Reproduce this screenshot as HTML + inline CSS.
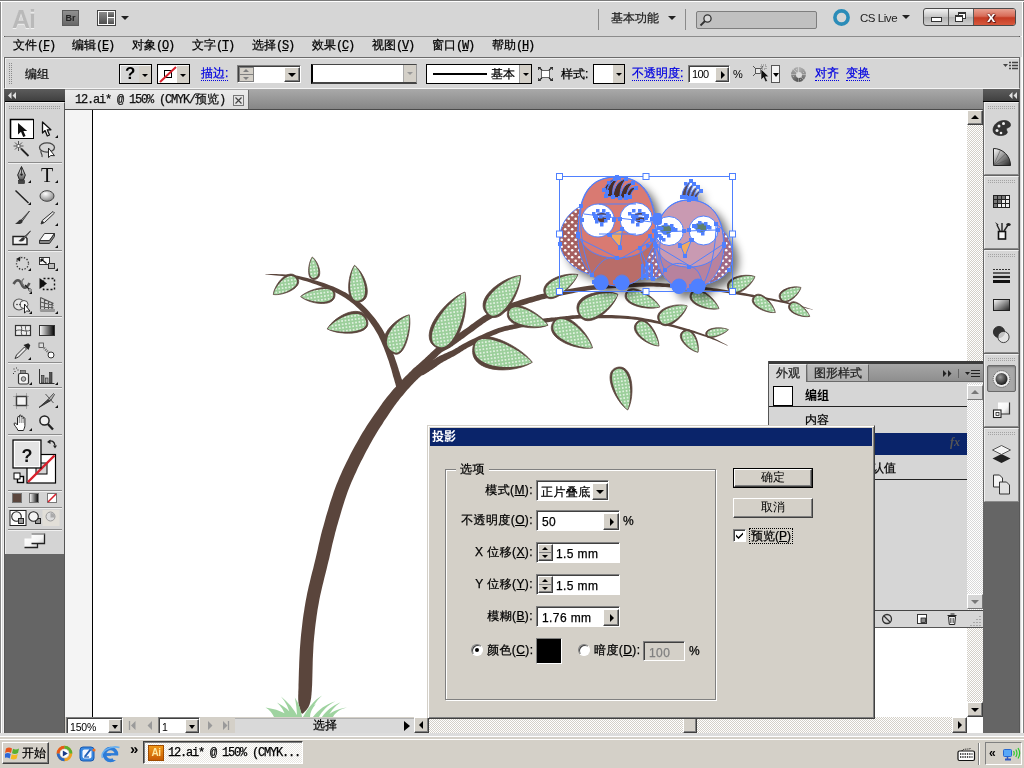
<!DOCTYPE html>
<html lang="zh-CN">
<head>
<meta charset="utf-8">
<title>12.ai* @ 150% (CMYK/预览)</title>
<style>
*{box-sizing:border-box;margin:0;padding:0}
html,body{width:1024px;height:768px;overflow:hidden;background:#d6d6d6}
body{position:relative;font-family:"Liberation Sans","Noto Sans CJK SC",sans-serif;font-size:12px;color:#000;line-height:1}
.a{position:absolute}
.zh,.tx,.dl{-webkit-text-stroke:.25px currentColor}
.zh{font-family:"Liberation Mono","WenQuanYi Zen Hei","Noto Sans CJK SC",monospace;font-size:12px;white-space:nowrap;line-height:14px}
.zh i{font-style:normal;letter-spacing:-1.2px}
.tx{font-family:"Liberation Sans","WenQuanYi Zen Hei","Noto Sans CJK SC",sans-serif;font-size:12px;white-space:nowrap;line-height:14px}
.lnk{color:#0000e0;border-bottom:1px dotted #0000e0;line-height:13px}
/* classic win controls */
.btn{background:#d4d0c8;border:1px solid;border-color:#fff #404040 #404040 #fff;box-shadow:inset -1px -1px 0 #808080}
.sunk{background:#fff;border:1px solid;border-color:#808080 #fff #fff #808080;box-shadow:inset 1px 1px 0 #404040}
.chk{background-image:linear-gradient(45deg,#fff 25%,transparent 25%,transparent 75%,#fff 75%),linear-gradient(45deg,#fff 25%,transparent 25%,transparent 75%,#fff 75%);background-size:2px 2px;background-position:0 0,1px 1px;background-color:#d4d0c8}
.dg{left:984px;width:35px;background:#d6d6d6;border:1px solid;border-color:#f0f0f0 #8a8a8a #8a8a8a #f0f0f0}
.dl{font:12px/14px "Liberation Sans","WenQuanYi Zen Hei","Noto Sans CJK SC",sans-serif;white-space:nowrap;letter-spacing:.4px}
.dr{right:342px;text-align:right}
.spin{width:15px;height:17px;background:#d4d0c8;border:1px solid;border-color:#fff #404040 #404040 #fff;box-shadow:inset -1px -1px 0 #808080}
.spin b{position:absolute;left:3px;border-width:3px!important}
.spin b.tri-u{top:2px;border-top:0!important}
.spin b.tri-d{top:10px;border-bottom:0!important}
.spin:after{content:"";position:absolute;left:0;top:7px;width:13px;height:1px;background:#808080}
.radio{width:12px;height:12px;border-radius:50%;background:#fff;border:1px solid;border-color:#808080 #fff #fff #808080;box-shadow:inset 1px 1px 0 #404040}
.radio b{position:absolute;left:3px;top:3px;width:4px;height:4px;border-radius:50%;background:#000}
.tri-d{width:0;height:0;border-left:4px solid transparent;border-right:4px solid transparent;border-top:4px solid #000}
.tri-u{width:0;height:0;border-left:4px solid transparent;border-right:4px solid transparent;border-bottom:4px solid #000}
.tri-r{width:0;height:0;border-top:4px solid transparent;border-bottom:4px solid transparent;border-left:4px solid #000}
.tri-l{width:0;height:0;border-top:4px solid transparent;border-bottom:4px solid transparent;border-right:4px solid #000}
</style>
</head>
<body>
<div id="root" style="position:absolute;left:0;top:0;width:1024px;height:768px;will-change:transform">

<!-- ===== window frame ===== -->
<div class="a" id="frameL" style="left:0;top:0;width:5px;height:737px;background:linear-gradient(to right,#888 0 1px,#fff 1px 2px,#d8d8d8 2px 3px,#f0f0f0 3px 4px,#585858 4px 5px)"></div>
<div class="a" id="frameR" style="left:1019px;top:0;width:5px;height:737px;background:linear-gradient(to right,#585858 0 1px,#d8d8d8 1px 2px,#f4f4f4 2px 3px,#fff 3px 4px,#808080 4px 5px)"></div>
<div class="a" id="frameT" style="left:0;top:0;width:1024px;height:2px;background:linear-gradient(#7b7b7b 0 1px,#fff 1px 2px)"></div>

<!-- ===== application bar ===== -->
<div class="a" id="appbar" style="left:2px;top:2px;width:1020px;height:34px;background:#d6d6d6"></div>
<div class="a" style="left:5px;top:36px;width:1014px;height:1px;background:#8c8c8c"></div>

<!-- ===== menu bar ===== -->
<div class="a" id="menubar" style="left:2px;top:37px;width:1020px;height:20px;background:#d6d6d6"></div>


<!-- ===== app bar content ===== -->
<div class="a" style="left:12px;top:5px;font:bold 25px/28px 'Liberation Sans',sans-serif;color:#b9b9b9;letter-spacing:-1px;text-shadow:0 1px 0 #f0f0f0">Ai</div>
<div class="a" style="left:62px;top:10px;width:17px;height:16px;background:linear-gradient(#909090,#686868);border:1px solid #5c5c5c;font:bold 9px/14px 'Liberation Sans',sans-serif;color:#222;text-align:center">Br</div>
<svg class="a" style="left:97px;top:10px" width="19" height="16" viewBox="0 0 19 16"><defs><linearGradient id="gl" x1="0" y1="0" x2="0" y2="1"><stop offset="0" stop-color="#8a8a8a"/><stop offset="1" stop-color="#4e4e4e"/></linearGradient></defs><rect x=".5" y=".5" width="18" height="15" fill="#fff" stroke="#444"/><rect x="2" y="2" width="8" height="12" fill="url(#gl)"/><rect x="11" y="2" width="6" height="5" fill="url(#gl)"/><rect x="11" y="8" width="6" height="6" fill="url(#gl)"/></svg>
<div class="a tri-d" style="left:121px;top:16px;border-top-color:#222"></div>
<div class="a" style="left:598px;top:9px;width:1px;height:21px;background:#8a8a8a"></div>
<div class="a tx" style="left:611px;top:11px;color:#222">基本功能</div>
<div class="a tri-d" style="left:668px;top:16px;border-top-color:#222"></div>
<div class="a" style="left:685px;top:9px;width:1px;height:21px;background:#8a8a8a"></div>
<div class="a" style="left:696px;top:11px;width:121px;height:18px;background:#c0c0c0;border:1px solid #7e7e7e;border-radius:2px"></div>
<svg class="a" style="left:699px;top:13px" width="14" height="14" viewBox="0 0 14 14"><circle cx="8.5" cy="5.5" r="3.6" fill="#d8d8d8" stroke="#333" stroke-width="1.3"/><path d="M6 8 L1.5 12.5" stroke="#333" stroke-width="1.8"/></svg>
<svg class="a" style="left:832px;top:8px" width="20" height="20" viewBox="0 0 20 20"><circle cx="9.5" cy="9.5" r="6.6" fill="none" stroke="#2b8cb8" stroke-width="3.6"/></svg>
<div class="a" style="left:860px;top:11px;font:11.5px/15px 'Liberation Sans',sans-serif;color:#222;letter-spacing:-.45px">CS Live</div>
<div class="a tri-d" style="left:902px;top:15px;border-top-color:#222"></div>
<!-- window buttons -->
<div class="a" style="left:923px;top:8px;width:93px;height:18px;border:1px solid #4a4a4a;border-radius:3px;background:linear-gradient(#f4f4f4,#c4c4c4 50%,#b0b0b0 51%,#d0d0d0);overflow:hidden">
  <div class="a" style="left:24px;top:0;width:1px;height:16px;background:#5a5a5a"></div>
  <div class="a" style="left:49px;top:0;width:1px;height:16px;background:#5a5a5a"></div>
  <div class="a" style="left:50px;top:0;width:42px;height:16px;background:linear-gradient(#e8a090,#d86c58 45%,#c43c24 55%,#d8583c)"></div>
  <div class="a" style="left:7px;top:8px;width:11px;height:5px;background:#fff;border:1px solid #333"></div>
  <div class="a" style="left:34px;top:3px;width:8px;height:7px;border:1px solid #333;border-top-width:2px;background:#fff"></div>
  <div class="a" style="left:31px;top:6px;width:8px;height:7px;border:1px solid #333;border-top-width:2px;background:#fff"></div>
  <div class="a" style="left:63px;top:-1px;font:bold 15px/17px 'Liberation Sans',sans-serif;color:#fff;text-shadow:0 0 2px #400,0 0 1px #400,1px 1px 0 #622">x</div>
</div>

<!-- ===== menu bar content ===== -->
<div class="a zh" style="left:13px;top:39px">文件<i>(<u>F</u>)</i></div>
<div class="a zh" style="left:72px;top:39px">编辑<i>(<u>E</u>)</i></div>
<div class="a zh" style="left:132px;top:39px">对象<i>(<u>O</u>)</i></div>
<div class="a zh" style="left:192px;top:39px">文字<i>(<u>T</u>)</i></div>
<div class="a zh" style="left:252px;top:39px">选择<i>(<u>S</u>)</i></div>
<div class="a zh" style="left:312px;top:39px">效果<i>(<u>C</u>)</i></div>
<div class="a zh" style="left:372px;top:39px">视图<i>(<u>V</u>)</i></div>
<div class="a zh" style="left:432px;top:39px">窗口<i>(<u>W</u>)</i></div>
<div class="a zh" style="left:492px;top:39px">帮助<i>(<u>H</u>)</i></div>

<!-- ===== control bar ===== -->
<div class="a" id="ctrlbar" style="left:4px;top:57px;width:1016px;height:32px;background:#d6d6d6;border:1px solid #6b6b6b;border-bottom-color:#f4f4f4;box-shadow:inset 1px 1px 0 #f0f0f0"></div>

<!-- ===== doc tab bar ===== -->
<div class="a" id="tabbar" style="left:65px;top:89px;width:918px;height:20px;background:linear-gradient(#a9a9a9,#868686)"></div>
<div class="a" style="left:65px;top:109px;width:918px;height:1px;background:#4a4a4a"></div>
<div class="a" id="doctab" style="left:65px;top:90px;width:184px;height:19px;background:linear-gradient(#ececec,#dcdcdc);border-right:1px solid #6a6a6a"></div>


<!-- ===== control bar content ===== -->
<div class="a" style="left:9px;top:63px;width:3px;height:22px;background-image:radial-gradient(circle at 0.5px 0.5px,#8a8a8a 0.6px,transparent 0.7px);background-size:2px 2px"></div>
<div class="a tx" style="left:25px;top:67px;color:#111">编组</div>
<!-- fill ? -->
<div class="a" style="left:119px;top:64px;width:33px;height:20px;border:1px solid #000;border-right-width:1px;background:#d6d6d6;box-shadow:inset 1px 1px 0 #f8f8f8">
  <div class="a" style="left:19px;top:1px;width:12px;height:17px;background:#d4d0c8"></div>
  <div class="a" style="left:5px;top:-1px;font:bold 17px/20px 'Liberation Sans',sans-serif">?</div>
  <div class="a tri-d" style="left:22px;top:9px;border-width:3px 3px 0 3px"></div>
</div>
<!-- stroke none -->
<div class="a" style="left:157px;top:64px;width:33px;height:20px;border:1px solid #000;background:#d6d6d6;box-shadow:inset 1px 1px 0 #f8f8f8">
  <div class="a" style="left:19px;top:1px;width:12px;height:17px;background:#d4d0c8"></div>
  <svg class="a" style="left:1px;top:1px" width="18" height="17" viewBox="0 0 18 17"><rect x="0" y="0" width="18" height="17" fill="#fff"/><rect x="5.5" y="4.5" width="7" height="7" fill="#fff" stroke="#000"/><path d="M1 16 L17 1" stroke="#d8202c" stroke-width="2"/></svg>
  <div class="a tri-d" style="left:22px;top:9px;border-width:3px 3px 0 3px"></div>
</div>
<div class="a tx lnk" style="left:201px;top:67px">描边:</div>
<!-- stroke weight -->
<div class="a sunk" style="left:237px;top:65px;width:64px;height:18px">
  <div class="a" style="left:1px;top:1px;width:15px;height:15px;background:#d4d0c8;border:1px solid #808080"></div>
  <div class="a" style="left:1px;top:8px;width:15px;height:1px;background:#808080"></div>
  <div class="a tri-u" style="left:5px;top:3px;border-width:0 3px 3px 3px;border-bottom-color:#808080"></div>
  <div class="a tri-d" style="left:5px;top:11px;border-width:3px 3px 0 3px;border-top-color:#808080"></div>
  <div class="a btn" style="left:46px;top:1px;width:16px;height:15px"><div class="a tri-d" style="left:3px;top:5px"></div></div>
</div>
<!-- brush combo -->
<div class="a" style="left:311px;top:64px;width:106px;height:20px;background:#fff;border:1px solid #000;border-width:1px 1px 2px 2px;border-color:#444 #999 #444 #000">
  <div class="a" style="left:90px;top:0;width:13px;height:17px;background:#d4d0c8;border-left:1px solid #aaa"><div class="a tri-d" style="left:3px;top:7px;border-width:3px 3px 0 3px;border-top-color:#999"></div></div>
</div>
<!-- stroke style -->
<div class="a" style="left:426px;top:64px;width:106px;height:20px;background:#fff;border:1px solid #000">
  <div class="a" style="left:6px;top:8px;width:54px;height:2px;background:#000"></div>
  <div class="a tx" style="left:64px;top:2px">基本</div>
  <div class="a" style="left:92px;top:0;width:12px;height:18px;background:#d4d0c8;border-left:1px solid #999"><div class="a tri-d" style="left:3px;top:8px;border-width:3px 3px 0 3px"></div></div>
</div>
<svg class="a" style="left:538px;top:67px" width="15" height="14" viewBox="0 0 15 14"><rect x="3.5" y="3.5" width="8" height="7" fill="#fff" stroke="#666"/><path d="M0 0l4 3M15 0l-4 3M0 14l4-3M15 14l-4-3" stroke="#222" stroke-width="1.2"/><path d="M0 0h3M0 0v3M15 0h-3M15 0v3M0 14h3M0 14v-3M15 14h-3M15 14v-3" stroke="#222" stroke-width="1.5"/></svg>
<div class="a tx" style="left:561px;top:67px">样式:</div>
<div class="a" style="left:593px;top:64px;width:32px;height:20px;background:#fff;border:1px solid #000">
  <div class="a" style="left:19px;top:0;width:11px;height:18px;background:#d4d0c8"><div class="a tri-d" style="left:3px;top:8px;border-width:3px 3px 0 3px"></div></div>
</div>
<div class="a tx lnk" style="left:632px;top:67px">不透明度:</div>
<div class="a sunk" style="left:688px;top:65px;width:42px;height:18px">
  <div class="a" style="left:3px;top:1px;font:11px/14px 'Liberation Sans',sans-serif;letter-spacing:-.6px">100</div>
  <div class="a btn" style="left:26px;top:1px;width:14px;height:15px"><div class="a tri-r" style="left:5px;top:3px;border-width:4px 0 4px 4px"></div></div>
</div>
<div class="a" style="left:733px;top:67px;font:11px/14px 'Liberation Sans',sans-serif">%</div>
<!-- select similar icon -->
<svg class="a" style="left:753px;top:64px" width="18" height="20" viewBox="0 0 18 20"><rect x="2.5" y="4.5" width="5" height="5" fill="#e8e8e8" stroke="#555"/><path d="M0 2l3 3M10 2l-2 3M0 12l3-3" stroke="#555"/><rect x="8" y="1" width="5" height="4" fill="none" stroke="#777" stroke-dasharray="1 1"/><path d="M8 5 L8 16 L10.5 13.5 L12.5 18 L14.5 17 L12.5 12.8 L16 12.8 Z" fill="#111" stroke="#eee" stroke-width=".6"/></svg>
<div class="a" style="left:771px;top:65px;width:9px;height:18px;background:#f4f4f4;border:1px solid #555"><div class="a tri-d" style="left:1px;top:7px;border-width:4px 3px 0 3px"></div></div>
<div class="a" style="left:791px;top:67px;width:15px;height:15px;border-radius:50%;background:repeating-conic-gradient(rgba(255,255,255,.35) 0 4deg,transparent 4deg 22.5deg),conic-gradient(#b4b4b4,#8c8c8c 90deg,#505050 180deg,#8c8c8c 270deg,#b4b4b4)"><div class="a" style="left:4.500px;top:4.500px;width:6px;height:6px;border-radius:50%;background:#dcdcdc"></div></div>
<div class="a tx lnk" style="left:815px;top:67px">对齐</div>
<div class="a tx lnk" style="left:846px;top:67px">变换</div>
<svg class="a" style="left:1003px;top:61px" width="15" height="10" viewBox="0 0 15 10"><path d="M0 3h5l-2.5 3z" fill="#444"/><path d="M6 1.5h2M9 1.5h6M6 4.5h2M9 4.5h6M6 7.5h2M9 7.5h6" stroke="#444" stroke-width="1.4"/></svg>

<!-- ===== doc tab content ===== -->
<div class="a zh" style="left:75px;top:93px;color:#111"><i>12.ai* @ 150% (CMYK/</i>预览<i>)</i></div>
<div class="a" style="left:233px;top:95px;width:11px;height:11px;border:1px solid #777;background:#e4e4e4"><svg class="a" style="left:1px;top:1px" width="7" height="7" viewBox="0 0 7 7"><path d="M.5 .5l6 6M6.5 .5l-6 6" stroke="#444" stroke-width="1.2"/></svg></div>

<!-- ===== canvas ===== -->
<div class="a" id="canvas" style="left:65px;top:110px;width:902px;height:607px;background:#fff;overflow:hidden">
  <div class="a" style="left:0;top:0;width:27px;height:607px;background:#f4f4f4"></div>
  <div class="a" style="left:27px;top:0;width:1px;height:607px;background:#000"></div>
<!--ART-->
<svg class="a" id="art" style="left:0;top:0" width="902" height="607" viewBox="65 110 902 607">
<defs>
<pattern id="lf" width="3.400" height="3.400" patternUnits="userSpaceOnUse" patternTransform="rotate(-8)"><rect width="3.400" height="3.400" fill="#9ccf9b"/><rect x="1" y="1" width="1.400" height="1.400" fill="#fff"/></pattern>
<pattern id="rw" width="7" height="7" patternUnits="userSpaceOnUse"><rect width="7" height="7" fill="#a5605e"/><circle cx="1.700" cy="1.700" r="1.300" fill="#fff"/><circle cx="5.200" cy="5.200" r="1.300" fill="#fff"/></pattern>
<pattern id="pw" width="7" height="7" patternUnits="userSpaceOnUse"><rect width="7" height="7" fill="#a06a86"/><circle cx="1.700" cy="1.700" r="1.300" fill="#fff"/><circle cx="5.200" cy="5.200" r="1.300" fill="#fff"/></pattern>
<filter id="ds" x="-20%" y="-20%" width="150%" height="150%"><feGaussianBlur in="SourceAlpha" stdDeviation="4"/><feOffset dx="6" dy="6" result="b"/><feComponentTransfer><feFuncA type="linear" slope=".55"/></feComponentTransfer><feMerge><feMergeNode/><feMergeNode in="SourceGraphic"/></feMerge></filter>
</defs>
<g id="tree">
<path d="M406.0 390.7L405.8 390.1L405.5 389.3L405.2 388.4L404.8 387.4L404.4 386.3L404.0 385.2L403.5 383.9L403.1 382.6L402.6 381.2L402.0 379.8L401.5 378.4L401.0 376.9L400.5 375.4L400.0 373.8L399.5 372.1L398.9 370.4L398.4 368.6L397.8 366.7L397.2 364.8L396.6 362.9L395.9 360.9L395.2 358.9L394.5 356.8L393.7 354.8L392.9 352.8L392.1 350.7L391.3 348.5L390.4 346.3L389.5 344.1L388.6 341.8L387.6 339.5L386.6 337.3L385.5 335.0L384.3 332.7L383.1 330.5L381.8 328.3L380.4 326.2L379.0 324.1L377.5 321.9L376.0 319.8L374.4 317.7L372.7 315.7L371.0 313.7L369.3 311.7L367.5 309.7L365.6 307.8L363.8 306.0L361.9 304.3L359.9 302.6L358.0 301.0L356.1 299.5L354.1 298.0L352.1 296.6L350.0 295.3L347.9 293.9L345.7 292.6L343.4 291.4L341.0 290.2L338.6 288.9L335.9 287.8L333.2 286.6L330.2 285.4L327.1 284.2L323.9 283.1L320.6 282.0L317.3 280.9L313.9 279.9L310.6 278.9L307.3 278.0L304.0 277.2L300.8 276.5L297.8 275.8L294.8 275.3L291.7 274.9L288.5 274.6L285.3 274.4L282.2 274.3L279.2 274.2L276.3 274.1L273.6 274.1L271.1 274.1L268.9 274.1L267.0 274.1L265.5 274.0L265.5 274.4L267.0 274.6L268.9 274.8L271.1 275.0L273.6 275.2L276.2 275.5L279.1 275.8L282.1 276.1L285.1 276.5L288.2 277.0L291.3 277.5L294.3 278.1L297.2 278.8L300.1 279.5L303.2 280.4L306.3 281.3L309.5 282.3L312.8 283.4L316.1 284.5L319.3 285.7L322.5 286.9L325.6 288.1L328.6 289.4L331.4 290.6L334.1 291.8L336.5 293.1L338.9 294.3L341.1 295.6L343.2 296.8L345.3 298.1L347.3 299.4L349.2 300.8L351.0 302.2L352.8 303.6L354.6 305.1L356.4 306.7L358.1 308.3L359.9 310.0L361.6 311.8L363.2 313.6L364.8 315.5L366.4 317.4L368.0 319.4L369.5 321.4L370.9 323.5L372.3 325.5L373.7 327.6L375.0 329.7L376.2 331.7L377.4 333.7L378.5 335.8L379.5 337.9L380.5 340.0L381.5 342.2L382.4 344.4L383.3 346.6L384.2 348.8L385.0 350.9L385.8 353.1L386.6 355.2L387.3 357.2L388.0 359.2L388.7 361.1L389.3 363.1L389.9 365.0L390.5 366.9L391.1 368.8L391.6 370.6L392.1 372.4L392.6 374.2L393.0 375.9L393.5 377.5L394.0 379.1L394.4 380.6L394.8 382.1L395.3 383.6L395.7 385.0L396.0 386.3L396.4 387.6L396.7 388.8L397.0 389.9L397.3 390.9L397.6 391.9L397.8 392.6L398.0 393.3Z" fill="#5a453c"/>
<path d="M422.7 375.5L423.2 375.1L423.9 374.7L424.6 374.3L425.4 373.7L426.3 373.2L427.3 372.6L428.3 371.9L429.3 371.3L430.3 370.6L431.2 370.0L432.2 369.4L433.0 368.9L433.8 368.3L434.6 367.8L435.3 367.2L436.0 366.7L436.7 366.2L437.3 365.7L438.0 365.2L438.7 364.8L439.4 364.3L440.1 363.8L440.9 363.3L441.7 362.7L442.7 362.2L443.7 361.6L444.8 361.0L445.9 360.4L447.1 359.8L448.4 359.1L449.6 358.5L450.9 357.8L452.2 357.1L453.5 356.4L454.8 355.7L456.0 355.0L457.2 354.3L458.4 353.6L459.4 353.0L460.4 352.3L461.5 351.6L462.5 351.0L463.5 350.3L464.6 349.6L465.8 348.9L467.1 348.1L468.6 347.3L470.2 346.5L472.1 345.5L474.2 344.4L476.5 343.3L478.9 342.1L481.4 340.9L483.9 339.7L486.5 338.4L489.0 337.3L491.5 336.1L493.9 335.1L496.1 334.2L498.2 333.3L500.0 332.6L501.8 332.1L503.4 331.6L504.9 331.1L506.3 330.7L507.8 330.4L509.3 330.1L510.8 329.7L512.3 329.4L514.0 329.1L515.8 328.7L517.8 328.2L519.9 327.8L522.2 327.3L524.7 326.7L527.2 326.2L529.8 325.7L532.4 325.1L535.1 324.6L537.6 324.1L540.0 323.6L542.3 323.2L544.5 322.8L546.3 322.5L548.0 322.2L549.4 322.0L550.6 321.8L551.7 321.7L552.7 321.6L553.7 321.5L554.6 321.5L555.6 321.4L556.6 321.3L557.6 321.2L558.9 321.1L560.2 321.0L561.6 320.8L563.0 320.6L564.2 320.4L565.5 320.1L566.8 319.9L568.2 319.7L569.6 319.4L571.2 319.2L573.1 319.0L575.1 318.8L577.4 318.7L580.0 318.6L583.1 318.5L586.5 318.4L590.3 318.4L594.3 318.3L598.5 318.2L602.8 318.2L607.2 318.2L611.6 318.3L615.9 318.4L620.1 318.5L624.1 318.7L627.9 319.0L631.4 319.3L634.8 319.7L638.2 320.1L641.4 320.6L644.6 321.1L647.8 321.7L650.9 322.3L654.1 322.9L657.2 323.6L660.3 324.3L663.5 325.0L666.7 325.7L670.0 326.5L673.4 327.3L676.9 328.2L680.3 329.2L683.8 330.2L687.3 331.2L690.7 332.2L694.0 333.1L697.2 334.1L700.2 335.1L703.1 336.0L705.7 336.8L708.2 337.7L710.6 338.5L712.8 339.4L715.0 340.3L717.0 341.1L719.0 341.9L720.8 342.7L722.4 343.5L723.9 344.1L725.2 344.7L726.4 345.3L727.4 345.7L727.6 345.3L726.6 344.8L725.5 344.2L724.2 343.5L722.7 342.8L721.2 341.9L719.4 341.0L717.5 340.0L715.5 339.1L713.4 338.1L711.1 337.1L708.8 336.1L706.3 335.2L703.7 334.2L700.8 333.2L697.8 332.2L694.6 331.1L691.3 330.1L687.9 329.0L684.5 328.0L681.0 327.0L677.5 326.0L674.0 325.0L670.6 324.1L667.3 323.3L664.1 322.5L660.9 321.7L657.7 321.0L654.6 320.3L651.5 319.6L648.3 319.0L645.1 318.4L641.9 317.8L638.6 317.3L635.2 316.8L631.7 316.4L628.1 316.0L624.3 315.7L620.3 315.4L616.0 315.2L611.7 315.1L607.2 315.0L602.8 314.9L598.5 314.9L594.2 314.9L590.2 314.9L586.5 314.9L583.0 315.0L580.0 315.0L577.3 315.1L574.9 315.2L572.7 315.3L570.8 315.5L569.1 315.7L567.6 315.9L566.2 316.1L564.9 316.3L563.6 316.5L562.4 316.7L561.1 316.9L559.8 317.0L558.5 317.1L557.3 317.2L556.3 317.3L555.3 317.3L554.4 317.4L553.4 317.4L552.4 317.5L551.3 317.6L550.2 317.7L548.8 317.9L547.4 318.1L545.7 318.3L543.7 318.6L541.6 319.0L539.3 319.4L536.8 319.9L534.2 320.3L531.6 320.8L529.0 321.3L526.3 321.8L523.8 322.3L521.3 322.8L519.0 323.3L516.8 323.8L514.9 324.1L513.1 324.5L511.4 324.8L509.8 325.1L508.3 325.4L506.8 325.7L505.2 326.0L503.6 326.4L502.0 326.9L500.3 327.4L498.4 328.0L496.4 328.7L494.3 329.5L491.9 330.4L489.5 331.4L486.9 332.6L484.3 333.7L481.7 334.9L479.1 336.1L476.6 337.3L474.1 338.5L471.8 339.6L469.7 340.6L467.8 341.5L466.0 342.4L464.5 343.2L463.0 344.0L461.7 344.8L460.5 345.5L459.4 346.1L458.4 346.8L457.4 347.4L456.4 348.0L455.3 348.6L454.3 349.2L453.2 349.8L452.0 350.4L450.7 350.9L449.5 351.5L448.2 352.1L446.9 352.7L445.6 353.2L444.3 353.8L443.0 354.4L441.7 354.9L440.5 355.5L439.4 356.1L438.3 356.7L437.2 357.2L436.3 357.8L435.4 358.4L434.6 358.9L433.8 359.5L433.1 360.0L432.4 360.5L431.7 361.1L431.1 361.6L430.4 362.1L429.7 362.6L429.0 363.1L428.2 363.7L427.3 364.4L426.4 365.1L425.4 365.8L424.5 366.5L423.6 367.2L422.7 367.9L421.8 368.6L421.0 369.2L420.3 369.7L419.8 370.2L419.3 370.5Z" fill="#5a453c"/>
<path d="M302.7 713.7L303.1 713.3L303.5 712.9L304.0 712.4L304.6 711.8L305.2 711.2L305.9 710.5L306.6 709.7L307.2 708.8L307.9 707.9L308.5 706.9L309.0 705.8L309.5 704.7L309.8 703.7L310.1 702.7L310.4 701.8L310.6 700.8L310.8 699.8L311.0 698.7L311.2 697.5L311.3 696.1L311.5 694.6L311.6 692.8L311.8 690.7L311.9 688.3L312.1 685.5L312.2 682.4L312.3 678.9L312.4 675.2L312.5 671.3L312.6 667.3L312.7 663.2L312.8 659.1L313.0 655.0L313.2 651.0L313.4 647.2L313.6 643.5L313.9 640.0L314.2 636.5L314.6 633.1L314.9 629.7L315.3 626.3L315.7 623.0L316.2 619.6L316.6 616.3L317.1 613.0L317.6 609.6L318.2 606.3L318.8 602.9L319.4 599.5L320.1 596.1L320.9 592.6L321.7 589.1L322.5 585.5L323.4 582.0L324.2 578.5L325.1 575.0L326.0 571.6L326.8 568.2L327.6 564.8L328.4 561.5L329.2 558.4L329.9 555.3L330.5 552.4L331.2 549.5L331.8 546.8L332.4 544.0L333.1 541.2L333.8 538.5L334.5 535.7L335.2 532.8L336.0 529.9L336.8 526.8L337.8 523.6L338.7 520.3L339.7 516.9L340.7 513.5L341.7 510.0L342.8 506.5L343.9 503.0L345.0 499.5L346.2 496.0L347.4 492.6L348.7 489.1L350.0 485.7L351.4 482.3L352.9 478.9L354.4 475.4L356.1 471.9L357.7 468.3L359.4 464.8L361.1 461.3L362.9 457.9L364.6 454.5L366.4 451.1L368.1 447.9L369.8 444.7L371.5 441.7L373.3 438.6L375.1 435.6L376.9 432.6L378.7 429.6L380.5 426.7L382.4 423.9L384.1 421.1L385.9 418.5L387.6 416.0L389.2 413.6L390.7 411.3L392.1 409.2L393.5 407.3L394.7 405.5L395.9 403.9L397.1 402.3L398.2 400.9L399.3 399.5L400.4 398.1L401.5 396.7L402.7 395.4L403.9 394.0L405.1 392.6L406.3 391.1L407.6 389.6L408.9 388.2L410.2 386.7L411.5 385.3L412.8 383.9L414.1 382.6L415.4 381.3L416.6 380.0L417.8 378.9L418.9 377.8L420.0 376.9L420.9 376.0L421.8 375.4L422.6 374.8L423.4 374.2L424.1 373.8L424.8 373.4L425.5 373.0L426.2 372.6L427.0 372.2L427.8 371.7L428.6 371.2L429.4 370.7L430.1 370.2L430.8 369.8L431.6 369.3L432.3 368.8L433.0 368.3L433.7 367.9L434.4 367.5L435.0 367.1L435.5 366.7L436.1 366.4L436.5 366.1L436.8 365.8L429.2 355.4L428.8 355.6L428.4 356.0L428.0 356.3L427.4 356.8L426.9 357.2L426.3 357.7L425.6 358.3L425.0 358.8L424.3 359.4L423.6 359.9L422.9 360.5L422.2 361.1L421.7 361.6L421.1 362.0L420.5 362.5L419.9 363.0L419.2 363.6L418.4 364.2L417.6 364.9L416.8 365.6L415.9 366.4L414.9 367.2L413.9 368.1L412.8 369.1L411.7 370.2L410.5 371.4L409.3 372.6L408.0 373.9L406.7 375.2L405.3 376.6L403.9 378.0L402.5 379.5L401.0 381.0L399.6 382.5L398.3 384.0L396.9 385.4L395.7 386.9L394.4 388.3L393.2 389.6L392.0 391.0L390.8 392.4L389.6 393.9L388.3 395.4L387.0 397.1L385.7 398.8L384.3 400.6L382.8 402.6L381.3 404.7L379.7 407.0L378.0 409.4L376.2 411.9L374.4 414.6L372.5 417.3L370.5 420.2L368.6 423.1L366.6 426.1L364.7 429.2L362.7 432.3L360.8 435.5L359.0 438.7L357.2 441.9L355.3 445.2L353.5 448.6L351.6 452.1L349.8 455.6L348.0 459.2L346.2 462.8L344.4 466.4L342.7 470.0L341.1 473.7L339.5 477.3L338.0 480.9L336.5 484.4L335.2 488.1L333.8 491.7L332.6 495.4L331.4 499.0L330.2 502.6L329.1 506.2L328.1 509.7L327.0 513.2L326.0 516.6L325.1 519.9L324.2 523.2L323.3 526.4L322.4 529.5L321.6 532.4L320.9 535.3L320.2 538.2L319.6 541.0L318.9 543.8L318.3 546.6L317.7 549.5L317.0 552.4L316.3 555.4L315.6 558.5L314.8 561.7L314.0 565.0L313.2 568.4L312.3 571.8L311.4 575.3L310.5 578.9L309.7 582.5L308.8 586.1L308.0 589.7L307.2 593.3L306.5 596.9L305.8 600.5L305.2 604.0L304.6 607.5L304.1 611.0L303.5 614.4L303.0 617.9L302.6 621.3L302.2 624.8L301.8 628.2L301.4 631.7L301.0 635.3L300.7 638.8L300.4 642.5L300.1 646.3L299.8 650.3L299.6 654.4L299.4 658.5L299.2 662.7L299.1 666.9L298.9 670.9L298.8 674.8L298.7 678.5L298.6 681.9L298.5 685.0L298.5 687.7L298.4 690.0L298.3 692.1L298.3 693.8L298.2 695.3L298.2 696.6L298.2 697.7L298.2 698.7L298.2 699.6L298.3 700.5L298.4 701.4L298.4 702.3L298.5 703.3L298.7 704.3L298.9 705.2L299.1 706.2L299.4 707.2L299.7 708.1L300.0 709.0L300.2 709.9L300.5 710.8L300.7 711.5L301.0 712.2L301.1 712.8L301.3 713.3Z" fill="#5a453c"/>
<path d="M424.4 368.5L424.9 368.1L425.5 367.5L426.3 366.8L427.1 366.0L428.0 365.1L428.9 364.2L429.9 363.3L430.9 362.4L431.8 361.5L432.7 360.6L433.6 359.8L434.4 359.1L435.1 358.4L435.9 357.7L436.6 357.0L437.2 356.4L437.9 355.7L438.5 355.1L439.1 354.6L439.7 354.0L440.3 353.5L440.9 353.0L441.5 352.6L442.0 352.1L442.6 351.8L443.1 351.4L443.7 351.1L444.3 350.7L444.9 350.4L445.6 350.1L446.2 349.8L446.9 349.4L447.6 349.1L448.3 348.7L449.0 348.3L449.7 347.9L450.4 347.5L450.9 347.2L451.4 346.8L451.9 346.5L452.4 346.2L452.8 345.9L453.3 345.5L453.8 345.1L454.4 344.7L455.0 344.3L455.7 343.8L456.5 343.2L457.4 342.6L458.3 341.9L459.3 341.1L460.4 340.4L461.5 339.6L462.7 338.7L463.9 337.9L465.1 337.0L466.4 336.0L467.7 335.1L469.0 334.1L470.5 333.1L471.9 332.0L473.5 330.9L475.0 329.8L476.6 328.5L478.3 327.3L480.0 326.1L481.6 324.9L483.4 323.6L485.1 322.4L486.8 321.3L488.5 320.2L490.2 319.2L492.0 318.2L493.7 317.2L495.5 316.3L497.3 315.4L499.0 314.5L500.9 313.7L502.7 312.8L504.6 312.0L506.5 311.2L508.5 310.3L510.5 309.5L512.6 308.7L514.8 307.9L517.1 307.1L519.4 306.3L521.9 305.5L524.4 304.7L526.9 303.9L529.4 303.1L531.9 302.4L534.3 301.7L536.6 301.0L538.8 300.4L540.9 299.8L542.8 299.3L544.5 298.9L546.0 298.5L547.5 298.2L548.8 297.8L550.2 297.6L551.6 297.3L553.1 297.0L554.7 296.7L556.4 296.4L558.3 296.1L560.4 295.7L562.8 295.2L565.2 294.7L567.6 294.2L570.2 293.7L572.9 293.2L575.6 292.6L578.5 292.1L581.5 291.6L584.6 291.1L587.8 290.6L591.2 290.1L594.7 289.7L598.5 289.4L602.6 289.0L607.0 288.6L611.5 288.3L616.2 288.0L621.0 287.7L625.7 287.4L630.4 287.2L634.9 287.0L639.2 286.8L643.3 286.7L647.0 286.6L650.4 286.6L653.7 286.6L656.7 286.7L659.6 286.8L662.4 286.9L665.1 287.1L667.6 287.3L670.2 287.5L672.6 287.7L675.0 287.9L677.5 288.1L679.9 288.2L682.2 288.4L684.4 288.5L686.4 288.6L688.4 288.7L690.3 288.8L692.1 288.9L694.0 289.0L695.9 289.1L697.9 289.3L700.1 289.5L702.4 289.7L704.8 290.0L707.5 290.3L710.3 290.6L713.2 291.0L716.2 291.4L719.3 291.8L722.4 292.3L725.6 292.7L728.9 293.2L732.1 293.7L735.4 294.2L738.6 294.7L741.8 295.2L745.0 295.8L748.3 296.3L751.6 296.9L754.9 297.5L758.3 298.1L761.6 298.7L765.0 299.3L768.3 299.9L771.5 300.5L774.7 301.2L777.8 301.8L780.8 302.4L783.8 303.0L786.9 303.7L790.0 304.4L793.1 305.1L796.1 305.8L799.1 306.5L801.9 307.2L804.5 307.8L806.9 308.4L809.1 308.9L810.9 309.3L812.4 309.7L812.6 309.3L811.1 308.9L809.2 308.4L807.1 307.7L804.7 307.0L802.1 306.3L799.3 305.5L796.4 304.6L793.4 303.8L790.3 302.9L787.2 302.1L784.2 301.3L781.2 300.6L778.2 299.9L775.1 299.2L771.9 298.5L768.7 297.9L765.4 297.2L762.1 296.5L758.7 295.8L755.3 295.2L752.0 294.6L748.7 293.9L745.4 293.3L742.2 292.8L739.0 292.2L735.8 291.6L732.5 291.1L729.3 290.6L726.0 290.0L722.8 289.5L719.7 289.1L716.6 288.6L713.6 288.2L710.6 287.7L707.8 287.4L705.2 287.0L702.7 286.7L700.4 286.4L698.2 286.2L696.2 286.0L694.3 285.8L692.4 285.7L690.5 285.5L688.6 285.4L686.6 285.2L684.6 285.1L682.4 284.9L680.1 284.8L677.7 284.6L675.3 284.3L672.9 284.1L670.5 283.9L668.0 283.6L665.4 283.4L662.7 283.2L659.8 283.0L656.9 282.8L653.8 282.7L650.5 282.6L647.0 282.6L643.2 282.6L639.1 282.7L634.7 282.9L630.2 283.0L625.5 283.2L620.7 283.5L616.0 283.7L611.2 284.0L606.7 284.3L602.3 284.6L598.1 284.9L594.3 285.3L590.7 285.6L587.2 286.0L583.9 286.5L580.8 287.0L577.7 287.4L574.8 287.9L572.0 288.4L569.3 288.9L566.7 289.4L564.2 289.9L561.8 290.3L559.6 290.7L557.4 291.1L555.5 291.4L553.8 291.7L552.2 291.9L550.7 292.2L549.2 292.4L547.8 292.7L546.4 293.0L544.8 293.3L543.2 293.7L541.5 294.1L539.5 294.6L537.4 295.1L535.1 295.7L532.8 296.4L530.3 297.1L527.8 297.8L525.3 298.5L522.7 299.3L520.2 300.1L517.7 300.9L515.2 301.7L512.8 302.5L510.6 303.3L508.4 304.1L506.3 304.9L504.3 305.7L502.3 306.5L500.3 307.3L498.4 308.2L496.5 309.1L494.6 309.9L492.7 310.9L490.9 311.8L489.0 312.8L487.2 313.8L485.3 314.9L483.4 316.0L481.6 317.2L479.8 318.5L478.0 319.7L476.2 321.0L474.5 322.2L472.9 323.5L471.2 324.6L469.7 325.8L468.2 326.9L466.7 327.9L465.3 328.9L464.0 329.8L462.6 330.8L461.3 331.7L460.1 332.6L458.9 333.5L457.7 334.3L456.6 335.1L455.5 335.8L454.5 336.5L453.6 337.2L452.7 337.8L451.9 338.4L451.2 338.9L450.5 339.3L450.0 339.7L449.5 340.0L449.0 340.4L448.6 340.6L448.2 340.9L447.7 341.2L447.3 341.5L446.8 341.8L446.3 342.1L445.7 342.4L445.2 342.7L444.6 342.9L444.0 343.2L443.3 343.5L442.6 343.9L441.9 344.2L441.1 344.6L440.3 345.0L439.6 345.4L438.8 345.9L438.0 346.5L437.2 347.0L436.5 347.6L435.8 348.2L435.1 348.8L434.4 349.4L433.7 350.0L433.1 350.7L432.4 351.3L431.7 351.9L431.0 352.6L430.3 353.3L429.6 353.9L428.8 354.7L427.9 355.5L427.0 356.4L426.0 357.3L425.1 358.2L424.1 359.2L423.1 360.1L422.2 360.9L421.4 361.7L420.7 362.4L420.1 363.0L419.6 363.5Z" fill="#5a453c"/>
<path d="M265.5 707.5 C276 709 284 712 290 717 L274 717 C272 713 270 710 265.5 707.5Z M277 702.5 C284 706 290 711 294 717 L286 717 C284 711 281 706 277 702.5Z M281 696.5 C288 702 294 709 298 717 L291 717 C289 709 286 702 281 696.5Z M294.8 697.5 C299 703 301 710 302 717 L297 717 C297 710 296 703 294.8 697.5Z M322 695.4 C316 701 311 709 309 717 L303 717 C308 708 314 700 322 695.4Z M335.4 701.2 C328 705 322 711 319 717 L313 717 C318 710 326 704 335.4 701.2Z M340.6 702.3 C334 707 330 712 328 717 L322 717 C326 711 332 706 340.6 702.3Z M347 707.5 C340 709 335 713 333 717 L326 717 C331 712 338 708.5 347 707.5Z M316 704 C312 708 310 713 310 717 L306 717 C308 712 311 707 316 704Z" fill="#9fd3a0"/>
<path d="M297.5 278.0 C289.5 266.3 274.6 283.4 273.3 294.5 C283.2 296.0 303.9 287.4 297.5 278.0 Z" fill="#5a453c" stroke="#5a453c" stroke-width=".8"/><path d="M296.2 278.9 C289.8 269.6 275.5 284.8 273.7 294.2 C282.4 294.9 301.3 286.4 296.2 278.9 Z" fill="url(#lf)"/>
<path d="M314.0 279.5 C306.2 280.1 308.0 263.0 312.3 257.0 C318.9 262.2 324.3 278.7 314.0 279.5 Z" fill="#5a453c" stroke="#5a453c" stroke-width=".8"/><path d="M313.9 277.9 C307.6 278.4 309.0 262.9 312.3 257.5 C317.7 262.2 322.1 277.3 313.9 277.9 Z" fill="url(#lf)"/>
<path d="M335.0 293.8 C334.0 282.1 308.6 288.9 300.6 296.6 C309.9 304.5 336.2 308.1 335.0 293.8 Z" fill="#5a453c" stroke="#5a453c" stroke-width=".8"/><path d="M333.4 293.9 C332.6 284.6 308.7 290.3 301.1 296.6 C309.7 302.8 334.3 305.4 333.4 293.9 Z" fill="url(#lf)"/>
<path d="M358.4 302.3 C344.8 303.7 347.3 275.4 354.5 265.3 C365.4 273.5 374.9 300.6 358.4 302.3 Z" fill="#5a453c" stroke="#5a453c" stroke-width=".8"/><path d="M358.2 300.7 C347.3 301.9 348.9 275.2 354.6 265.8 C363.4 273.7 371.4 299.3 358.2 300.7 Z" fill="url(#lf)"/>
<path d="M367.8 321.9 C364.2 301.3 335.2 314.8 327.2 328.9 C338.8 335.4 370.2 335.6 367.8 321.9 Z" fill="#5a453c" stroke="#5a453c" stroke-width=".8"/><path d="M366.2 322.2 C363.4 305.7 335.6 317.3 327.7 328.8 C338.4 333.7 368.1 333.1 366.2 322.2 Z" fill="url(#lf)"/>
<path d="M394.4 353.9 C370.7 344.9 391.3 319.2 409.2 314.8 C412.1 327.1 405.4 358.1 394.4 353.9 Z" fill="#5a453c" stroke="#5a453c" stroke-width=".8"/><path d="M395.0 352.4 C376.0 345.2 394.2 320.2 409.0 315.2 C410.8 326.5 403.8 355.7 395.0 352.4 Z" fill="url(#lf)"/>
<path d="M436.6 347.7 C415.1 336.7 445.0 299.4 465.0 292.0 C469.7 311.9 456.3 357.7 436.6 347.7 Z" fill="#5a453c" stroke="#5a453c" stroke-width=".8"/><path d="M437.3 346.3 C420.1 337.5 447.6 300.6 464.8 292.4 C467.4 310.7 453.1 354.3 437.3 346.3 Z" fill="url(#lf)"/>
<path d="M488.4 315.4 C470.5 301.0 501.8 276.8 520.6 275.4 C520.9 292.1 502.3 326.6 488.4 315.4 Z" fill="#5a453c" stroke="#5a453c" stroke-width=".8"/><path d="M489.4 314.2 C475.1 302.6 504.0 278.5 520.3 275.8 C519.2 290.7 500.5 323.1 489.4 314.2 Z" fill="url(#lf)"/>
<path d="M508.0 310.5 C512.9 297.1 540.9 313.5 548.0 325.2 C534.4 331.3 502.0 326.8 508.0 310.5 Z" fill="#5a453c" stroke="#5a453c" stroke-width=".8"/><path d="M509.5 311.1 C513.4 300.4 540.4 315.1 547.5 325.0 C535.2 329.3 504.7 324.1 509.5 311.1 Z" fill="url(#lf)"/>
<path d="M473.8 343.8 C479.6 325.3 521.2 346.6 532.3 362.3 C512.1 375.3 464.5 373.2 473.8 343.8 Z" fill="#5a453c" stroke="#5a453c" stroke-width=".8"/><path d="M475.3 344.3 C480.0 329.5 520.5 348.8 531.8 362.2 C513.3 371.8 467.9 367.8 475.3 344.3 Z" fill="url(#lf)"/>
<path d="M545.6 296.1 C536.2 281.9 564.2 271.5 577.9 274.6 C573.7 285.9 552.1 305.9 545.6 296.1 Z" fill="#5a453c" stroke="#5a453c" stroke-width=".8"/><path d="M546.9 295.2 C539.4 283.9 565.3 273.2 577.5 274.9 C573.0 284.7 552.2 303.1 546.9 295.2 Z" fill="url(#lf)"/>
<path d="M578.8 314.7 C568.6 295.2 602.0 287.6 617.9 294.2 C613.4 309.4 587.6 331.5 578.8 314.7 Z" fill="#5a453c" stroke="#5a453c" stroke-width=".8"/><path d="M580.2 314.0 C572.0 298.4 603.3 289.9 617.5 294.4 C612.4 307.4 587.3 327.4 580.2 314.0 Z" fill="url(#lf)"/>
<path d="M625.7 293.2 C630.6 281.1 654.3 296.2 659.9 306.9 C648.4 310.8 620.8 305.4 625.7 293.2 Z" fill="#5a453c" stroke="#5a453c" stroke-width=".8"/><path d="M627.2 293.8 C631.1 284.1 653.7 297.7 659.5 306.7 C649.0 309.3 623.3 303.6 627.2 293.8 Z" fill="url(#lf)"/>
<path d="M691.0 293.0 C696.9 282.4 715.5 298.4 719.0 308.6 C708.3 311.3 684.8 304.1 691.0 293.0 Z" fill="#5a453c" stroke="#5a453c" stroke-width=".8"/><path d="M692.4 293.8 C697.1 285.3 714.9 299.6 718.6 308.4 C709.1 310.0 687.5 302.6 692.4 293.8 Z" fill="url(#lf)"/>
<path d="M658.9 321.5 C651.9 308.8 675.9 302.2 687.2 305.9 C684.1 317.0 665.5 333.6 658.9 321.5 Z" fill="#5a453c" stroke="#5a453c" stroke-width=".8"/><path d="M660.3 320.7 C654.7 310.5 676.8 303.7 686.8 306.1 C683.4 315.6 665.6 330.4 660.3 320.7 Z" fill="url(#lf)"/>
<path d="M553.4 321.5 C563.6 306.4 588.8 332.3 592.5 347.9 C576.2 350.9 542.5 337.6 553.4 321.5 Z" fill="#5a453c" stroke="#5a453c" stroke-width=".8"/><path d="M554.7 322.4 C562.9 310.3 587.6 334.1 592.1 347.6 C577.5 349.0 546.0 335.3 554.7 322.4 Z" fill="url(#lf)"/>
<path d="M637.4 321.5 C646.4 313.6 658.9 335.1 658.9 346.0 C647.0 345.6 626.6 331.0 637.4 321.5 Z" fill="#5a453c" stroke="#5a453c" stroke-width=".8"/><path d="M638.5 322.7 C645.7 316.4 657.9 336.1 658.6 345.6 C648.4 344.5 629.8 330.3 638.5 322.7 Z" fill="url(#lf)"/>
<path d="M683.0 331.0 C692.8 324.1 700.1 342.8 698.0 352.3 C689.0 350.7 674.2 337.2 683.0 331.0 Z" fill="#5a453c" stroke="#5a453c" stroke-width=".8"/><path d="M683.9 332.3 C691.7 326.8 699.0 343.7 697.7 351.9 C690.1 350.0 676.9 337.3 683.9 332.3 Z" fill="url(#lf)"/>
<path d="M705.8 335.0 C704.0 327.2 721.7 326.4 728.4 329.7 C723.6 334.8 707.3 341.3 705.8 335.0 Z" fill="#5a453c" stroke="#5a453c" stroke-width=".8"/><path d="M707.4 334.6 C705.9 328.4 721.9 327.3 727.9 329.8 C723.5 334.0 708.5 339.6 707.4 334.6 Z" fill="url(#lf)"/>
<path d="M728.4 289.8 C722.3 277.6 744.7 272.6 755.0 276.6 C751.6 286.4 733.8 300.7 728.4 289.8 Z" fill="#5a453c" stroke="#5a453c" stroke-width=".8"/><path d="M729.8 289.1 C725.0 279.3 745.5 274.0 754.6 276.8 C751.0 285.1 734.2 297.8 729.8 289.1 Z" fill="url(#lf)"/>
<path d="M753.4 296.9 C759.7 288.0 773.6 303.3 775.3 312.5 C766.2 313.6 747.4 305.3 753.4 296.9 Z" fill="#5a453c" stroke="#5a453c" stroke-width=".8"/><path d="M754.7 297.8 C759.8 290.7 772.9 304.4 774.9 312.2 C767.0 312.6 749.9 304.5 754.7 297.8 Z" fill="url(#lf)"/>
<path d="M780.0 299.2 C775.0 290.1 792.7 285.0 801.0 287.5 C798.7 295.7 784.9 308.0 780.0 299.2 Z" fill="#5a453c" stroke="#5a453c" stroke-width=".8"/><path d="M781.4 298.4 C777.4 291.2 793.4 286.1 800.6 287.7 C798.1 294.6 785.3 305.5 781.4 298.4 Z" fill="url(#lf)"/>
<path d="M789.4 303.9 C793.9 296.6 807.3 308.9 809.7 316.4 C801.7 318.1 784.4 311.9 789.4 303.9 Z" fill="#5a453c" stroke="#5a453c" stroke-width=".8"/><path d="M790.8 304.7 C794.4 298.9 806.8 309.8 809.3 316.1 C802.3 317.2 786.8 311.2 790.8 304.7 Z" fill="url(#lf)"/>
<path d="M616.9 367.4 C601.2 371.4 615.6 401.7 627.7 410.0 C635.1 396.8 633.8 363.1 616.9 367.4 Z" fill="#5a453c" stroke="#5a453c" stroke-width=".8"/><path d="M617.3 369.0 C604.7 372.1 617.5 401.3 627.6 409.5 C633.1 397.3 630.8 365.5 617.3 369.0 Z" fill="url(#lf)"/>
</g>
<g id="birds" filter="url(#ds)">
<path d="M581 206 C566 214 558 228 560 244 C562 260 576 271 592 275 C584 258 579 232 581 206Z" fill="url(#rw)"/>
<path d="M650 236 C661 248 662 268 653 279 C646 273 640 262 640 248Z" fill="url(#rw)"/>
<path d="M617 177 C640 177 656 194 656 236 C656 268 640 286 618 286 C596 286 578 268 578 236 C578 192 592 177 617 177Z" fill="#b96d69"/>
<path d="M578 234 C578 190 592 177 617 177 C641 177 656 192 656 234 C650 253 632 258 617 258 C602 258 584 253 578 234Z" fill="#d97a72"/>
<path d="M614.500 220.500 A16.500 16.500 0 1 1 581.500 220.500 A16.500 16.500 0 1 1 614.500 220.500Z" fill="#fff"/>
<path d="M652.500 219 A16.300 16.300 0 1 1 619.900 219 A16.300 16.300 0 1 1 652.500 219Z" fill="#fff"/>
<path d="M609.500 235 L622.500 229 L620 247.500 Z" fill="#f2a95e"/>
<path d="M595 216 C598 211.500 606 211.500 609 216 C606 214.500 598 214.500 595 216Z M596.500 218.500 C599 216.500 605 216.500 607.500 218.500 C606.500 224 597.500 224 596.500 218.500Z" fill="#5a3a30"/>
<path d="M633 216 C636 211.500 644 211.500 647 216 C644 214.500 636 214.500 633 216Z M634.500 218.500 C637 216.500 643 216.500 645.500 218.500 C644.500 224 635.500 224 634.500 218.500Z" fill="#5a3a30"/>
<path d="M606 196 C606 186 611 180 619 178 C613 184 612 190 613 197Z M613 197 C614 186 619 180 626 179 C621 185 620 191 620 198Z M620 198 C622 188 626 182 633 183 C628 187 627 192 626 198Z M626 196 C629 189 632 186 636 188 C632 190 631 194 630 197Z M604 190 C606 184 610 180 615 179 C610 183 608 187 607 192Z" fill="#4b2f27"/>
<path d="M594 282 a7 7 0 1 0 14 0 a7 7 0 1 0 -14 0Z" fill="#c8784a"/>
<path d="M615 282 a7 7 0 1 0 14 0 a7 7 0 1 0 -14 0Z" fill="#c8784a"/>
<path d="M661 238 C650 249 644 262 645 276 C652 281 661 279 665 270 C660 262 658 250 661 238Z" fill="url(#pw)"/>
<path d="M716 224 C731 234 737 255 729 270 C723 279 712 283 703 285 C712 268 716 245 716 224Z" fill="url(#pw)"/>
<path d="M689 200 C711 200 724 218 724 244 C724 272 708 290 689 290 C670 290 655 272 655 244 C655 218 668 200 689 200Z" fill="#b7829e"/>
<path d="M655.500 246 C655 216 668 200 689 200 C711 200 724 216 723.500 246 C716 263 701 267 689 267 C676 267 662 263 655.500 246Z" fill="#c99ab2"/>
<path d="M683.500 231 A14.500 14.500 0 1 1 654.500 231 A14.500 14.500 0 1 1 683.500 231Z" fill="#fff"/>
<path d="M718 230.500 A14.500 14.500 0 1 1 689 230.500 A14.500 14.500 0 1 1 718 230.500Z" fill="#fff"/>
<path d="M680.500 245.500 L691.500 240 L685 256.500 Z" fill="#f2a95e"/>
<path d="M659 228 C663 223.500 670 224 673 229 C670 236.500 662 236 659 228Z" fill="#5f7f6c"/>
<path d="M694 226 C698 221.500 705 222 708 227 C705 234.500 697 234 694 226Z" fill="#5f7f6c"/>
<path d="M682 197 C682 190 686 184 691 181 C687 187 686 192 686 197Z M686 197 C687 190 690 186 694 184 C691 189 690 193 689 198Z M690 198 C691 192 694 188 698 187 C695 191 694 195 693 199Z M693 198 C695 194 698 191 701 191 C698 194 697 196 696 199Z" fill="#5c4a52"/>
<path d="M672 286 a7 7 0 1 0 14 0 a7 7 0 1 0 -14 0Z" fill="#c8784a"/>
<path d="M691 286 a7 7 0 1 0 14 0 a7 7 0 1 0 -14 0Z" fill="#c8784a"/>
</g>
<g id="sel">
<path d="M581 206 C566 214 558 228 560 244 C562 260 576 271 592 275 C584 258 579 232 581 206Z" fill="none" stroke="#4f80ff" stroke-width="1"/>
<path d="M650 236 C661 248 662 268 653 279 C646 273 640 262 640 248Z" fill="none" stroke="#4f80ff" stroke-width="1"/>
<path d="M617 177 C640 177 656 194 656 236 C656 268 640 286 618 286 C596 286 578 268 578 236 C578 192 592 177 617 177Z" fill="none" stroke="#4f80ff" stroke-width="1"/>
<path d="M578 234 C578 190 592 177 617 177 C641 177 656 192 656 234 C650 253 632 258 617 258 C602 258 584 253 578 234Z" fill="none" stroke="#4f80ff" stroke-width="1"/>
<path d="M614.500 220.500 A16.500 16.500 0 1 1 581.500 220.500 A16.500 16.500 0 1 1 614.500 220.500Z" fill="none" stroke="#4f80ff" stroke-width="1"/>
<path d="M652.500 219 A16.300 16.300 0 1 1 619.900 219 A16.300 16.300 0 1 1 652.500 219Z" fill="none" stroke="#4f80ff" stroke-width="1"/>
<path d="M609.500 235 L622.500 229 L620 247.500 Z" fill="none" stroke="#4f80ff" stroke-width="1"/>
<path d="M595 216 C598 211.500 606 211.500 609 216 C606 214.500 598 214.500 595 216Z M596.500 218.500 C599 216.500 605 216.500 607.500 218.500 C606.500 224 597.500 224 596.500 218.500Z" fill="none" stroke="#4f80ff" stroke-width="1"/>
<path d="M633 216 C636 211.500 644 211.500 647 216 C644 214.500 636 214.500 633 216Z M634.500 218.500 C637 216.500 643 216.500 645.500 218.500 C644.500 224 635.500 224 634.500 218.500Z" fill="none" stroke="#4f80ff" stroke-width="1"/>
<path d="M606 196 C606 186 611 180 619 178 C613 184 612 190 613 197Z M613 197 C614 186 619 180 626 179 C621 185 620 191 620 198Z M620 198 C622 188 626 182 633 183 C628 187 627 192 626 198Z M626 196 C629 189 632 186 636 188 C632 190 631 194 630 197Z M604 190 C606 184 610 180 615 179 C610 183 608 187 607 192Z" fill="none" stroke="#4f80ff" stroke-width="1"/>
<path d="M594 282 a7 7 0 1 0 14 0 a7 7 0 1 0 -14 0Z" fill="none" stroke="#4f80ff" stroke-width="1"/>
<path d="M615 282 a7 7 0 1 0 14 0 a7 7 0 1 0 -14 0Z" fill="none" stroke="#4f80ff" stroke-width="1"/>
<path d="M661 238 C650 249 644 262 645 276 C652 281 661 279 665 270 C660 262 658 250 661 238Z" fill="none" stroke="#4f80ff" stroke-width="1"/>
<path d="M716 224 C731 234 737 255 729 270 C723 279 712 283 703 285 C712 268 716 245 716 224Z" fill="none" stroke="#4f80ff" stroke-width="1"/>
<path d="M689 200 C711 200 724 218 724 244 C724 272 708 290 689 290 C670 290 655 272 655 244 C655 218 668 200 689 200Z" fill="none" stroke="#4f80ff" stroke-width="1"/>
<path d="M655.500 246 C655 216 668 200 689 200 C711 200 724 216 723.500 246 C716 263 701 267 689 267 C676 267 662 263 655.500 246Z" fill="none" stroke="#4f80ff" stroke-width="1"/>
<path d="M683.500 231 A14.500 14.500 0 1 1 654.500 231 A14.500 14.500 0 1 1 683.500 231Z" fill="none" stroke="#4f80ff" stroke-width="1"/>
<path d="M718 230.500 A14.500 14.500 0 1 1 689 230.500 A14.500 14.500 0 1 1 718 230.500Z" fill="none" stroke="#4f80ff" stroke-width="1"/>
<path d="M680.500 245.500 L691.500 240 L685 256.500 Z" fill="none" stroke="#4f80ff" stroke-width="1"/>
<path d="M659 228 C663 223.500 670 224 673 229 C670 236.500 662 236 659 228Z" fill="none" stroke="#4f80ff" stroke-width="1"/>
<path d="M694 226 C698 221.500 705 222 708 227 C705 234.500 697 234 694 226Z" fill="none" stroke="#4f80ff" stroke-width="1"/>
<path d="M682 197 C682 190 686 184 691 181 C687 187 686 192 686 197Z M686 197 C687 190 690 186 694 184 C691 189 690 193 689 198Z M690 198 C691 192 694 188 698 187 C695 191 694 195 693 199Z M693 198 C695 194 698 191 701 191 C698 194 697 196 696 199Z" fill="none" stroke="#4f80ff" stroke-width="1"/>
<path d="M672 286 a7 7 0 1 0 14 0 a7 7 0 1 0 -14 0Z" fill="none" stroke="#4f80ff" stroke-width="1"/>
<path d="M691 286 a7 7 0 1 0 14 0 a7 7 0 1 0 -14 0Z" fill="none" stroke="#4f80ff" stroke-width="1"/>
<path d="M584 214 L652 222 M578 238 L620 259 L657 238 M655 245 L690 266 L722 245 M599 204 L636 204 M599 234 L636 234 M657 232 L716 230 M592 274 C600 262 606 255 618 259 M640 248 C646 262 650 272 653 279 M665 270 C672 262 680 262 689 266 M703 285 C700 274 698 268 689 266" fill="none" stroke="#4f80ff" stroke-width="1"/>
<g fill="#4f80ff"><rect x="558" y="242" width="4" height="4"/><rect x="576" y="232" width="4" height="4"/><rect x="576" y="234" width="4" height="4"/><rect x="579" y="204" width="4" height="4"/><rect x="580" y="218" width="4" height="4"/><rect x="590" y="273" width="4" height="4"/><rect x="592" y="280" width="4" height="4"/><rect x="593" y="214" width="4" height="4"/><rect x="594" y="216" width="4" height="4"/><rect x="602" y="188" width="4" height="4"/><rect x="604" y="194" width="4" height="4"/><rect x="605" y="190" width="4" height="4"/><rect x="606" y="216" width="4" height="4"/><rect x="607" y="214" width="4" height="4"/><rect x="608" y="233" width="4" height="4"/><rect x="611" y="195" width="4" height="4"/><rect x="612" y="218" width="4" height="4"/><rect x="613" y="177" width="4" height="4"/><rect x="613" y="280" width="4" height="4"/><rect x="615" y="175" width="4" height="4"/><rect x="615" y="256" width="4" height="4"/><rect x="616" y="284" width="4" height="4"/><rect x="617" y="176" width="4" height="4"/><rect x="618" y="196" width="4" height="4"/><rect x="618" y="217" width="4" height="4"/><rect x="618" y="246" width="4" height="4"/><rect x="620" y="227" width="4" height="4"/><rect x="624" y="177" width="4" height="4"/><rect x="624" y="194" width="4" height="4"/><rect x="624" y="196" width="4" height="4"/><rect x="628" y="195" width="4" height="4"/><rect x="631" y="181" width="4" height="4"/><rect x="631" y="214" width="4" height="4"/><rect x="632" y="216" width="4" height="4"/><rect x="634" y="186" width="4" height="4"/><rect x="638" y="246" width="4" height="4"/><rect x="644" y="216" width="4" height="4"/><rect x="645" y="214" width="4" height="4"/><rect x="648" y="234" width="4" height="4"/><rect x="650" y="217" width="4" height="4"/><rect x="651" y="277" width="4" height="4"/><rect x="654" y="232" width="4" height="4"/><rect x="654" y="234" width="4" height="4"/><rect x="643" y="274" width="4" height="4"/><rect x="652" y="229" width="4" height="4"/><rect x="653" y="242" width="4" height="4"/><rect x="654" y="244" width="4" height="4"/><rect x="657" y="226" width="4" height="4"/><rect x="659" y="236" width="4" height="4"/><rect x="663" y="268" width="4" height="4"/><rect x="670" y="284" width="4" height="4"/><rect x="671" y="227" width="4" height="4"/><rect x="678" y="244" width="4" height="4"/><rect x="680" y="195" width="4" height="4"/><rect x="682" y="229" width="4" height="4"/><rect x="683" y="254" width="4" height="4"/><rect x="684" y="195" width="4" height="4"/><rect x="687" y="196" width="4" height="4"/><rect x="687" y="198" width="4" height="4"/><rect x="687" y="228" width="4" height="4"/><rect x="687" y="265" width="4" height="4"/><rect x="687" y="288" width="4" height="4"/><rect x="688" y="196" width="4" height="4"/><rect x="689" y="179" width="4" height="4"/><rect x="689" y="284" width="4" height="4"/><rect x="690" y="238" width="4" height="4"/><rect x="691" y="196" width="4" height="4"/><rect x="691" y="197" width="4" height="4"/><rect x="692" y="182" width="4" height="4"/><rect x="692" y="224" width="4" height="4"/><rect x="694" y="197" width="4" height="4"/><rect x="696" y="185" width="4" height="4"/><rect x="699" y="189" width="4" height="4"/><rect x="701" y="283" width="4" height="4"/><rect x="706" y="225" width="4" height="4"/><rect x="714" y="222" width="4" height="4"/><rect x="716" y="228" width="4" height="4"/><rect x="722" y="242" width="4" height="4"/><rect x="722" y="244" width="4" height="4"/><rect x="727" y="268" width="4" height="4"/></g>
<g fill="#4f80ff"><circle cx="601" cy="283" r="7.500"/><circle cx="622" cy="283" r="7.500"/><circle cx="679" cy="286.500" r="7.500"/><circle cx="698" cy="286.500" r="7.500"/><rect x="653" y="213" width="9" height="12" rx="3"/><rect x="641" y="264" width="2.500" height="16"/><rect x="646" y="262" width="2.500" height="18"/><rect x="650.500" y="264" width="2.500" height="16"/></g>
<g fill="#4f80ff"><rect x="592" y="212" width="3.500" height="3.500"/><rect x="596" y="209" width="3.500" height="3.500"/><rect x="602" y="209" width="3.500" height="3.500"/><rect x="606" y="212" width="3.500" height="3.500"/><rect x="599" y="215" width="3.500" height="3.500"/><rect x="595" y="220" width="3.500" height="3.500"/><rect x="600" y="223" width="3.500" height="3.500"/><rect x="604" y="219" width="3.500" height="3.500"/><rect x="628" y="212" width="3.500" height="3.500"/><rect x="632" y="209" width="3.500" height="3.500"/><rect x="638" y="209" width="3.500" height="3.500"/><rect x="642" y="212" width="3.500" height="3.500"/><rect x="635" y="215" width="3.500" height="3.500"/><rect x="631" y="220" width="3.500" height="3.500"/><rect x="636" y="223" width="3.500" height="3.500"/><rect x="640" y="219" width="3.500" height="3.500"/><rect x="660" y="227" width="3.500" height="3.500"/><rect x="664" y="223" width="3.500" height="3.500"/><rect x="670" y="224" width="3.500" height="3.500"/><rect x="674" y="228" width="3.500" height="3.500"/><rect x="667" y="234" width="3.500" height="3.500"/><rect x="663" y="231" width="3.500" height="3.500"/><rect x="694" y="225" width="3.500" height="3.500"/><rect x="698" y="221" width="3.500" height="3.500"/><rect x="704" y="222" width="3.500" height="3.500"/><rect x="708" y="226" width="3.500" height="3.500"/><rect x="701" y="232" width="3.500" height="3.500"/><rect x="697" y="229" width="3.500" height="3.500"/><rect x="604" y="194" width="3.500" height="3.500"/><rect x="607" y="181" width="3.500" height="3.500"/><rect x="611" y="195" width="3.500" height="3.500"/><rect x="617" y="176" width="3.500" height="3.500"/><rect x="618" y="196" width="3.500" height="3.500"/><rect x="624" y="177" width="3.500" height="3.500"/><rect x="624" y="196" width="3.500" height="3.500"/><rect x="631" y="181" width="3.500" height="3.500"/><rect x="628" y="195" width="3.500" height="3.500"/><rect x="634" y="186" width="3.500" height="3.500"/><rect x="602" y="188" width="3.500" height="3.500"/><rect x="613" y="177" width="3.500" height="3.500"/><rect x="680" y="195" width="3.500" height="3.500"/><rect x="684" y="182" width="3.500" height="3.500"/><rect x="689" y="179" width="3.500" height="3.500"/><rect x="692" y="182" width="3.500" height="3.500"/><rect x="696" y="185" width="3.500" height="3.500"/><rect x="699" y="189" width="3.500" height="3.500"/><rect x="687" y="196" width="3.500" height="3.500"/><rect x="691" y="197" width="3.500" height="3.500"/><rect x="694" y="197" width="3.500" height="3.500"/><rect x="607" y="233" width="3.500" height="3.500"/><rect x="620" y="227" width="3.500" height="3.500"/><rect x="618" y="245" width="3.500" height="3.500"/><rect x="678" y="243" width="3.500" height="3.500"/><rect x="689" y="238" width="3.500" height="3.500"/><rect x="683" y="254" width="3.500" height="3.500"/><rect x="654" y="230" width="3.500" height="3.500"/><rect x="658" y="234" width="3.500" height="3.500"/><rect x="662" y="238" width="3.500" height="3.500"/><rect x="650" y="238" width="3.500" height="3.500"/><rect x="646" y="244" width="3.500" height="3.500"/><rect x="655" y="244" width="3.500" height="3.500"/></g>
<rect x="559.500" y="176.500" width="173" height="115" fill="none" stroke="#4f80ff" stroke-width="1"/>
<g fill="#fff" stroke="#4f80ff" stroke-width="1"><rect x="556.5" y="173.5" width="6" height="6"/><rect x="643.0" y="173.5" width="6" height="6"/><rect x="729.5" y="173.5" width="6" height="6"/><rect x="556.5" y="231.0" width="6" height="6"/><rect x="729.5" y="231.0" width="6" height="6"/><rect x="556.5" y="288.5" width="6" height="6"/><rect x="643.0" y="288.5" width="6" height="6"/><rect x="729.5" y="288.5" width="6" height="6"/></g>
</g>
</svg>
<!--/ART-->
</div>

<!-- ===== left tool panel ===== -->
<div class="a" id="toolhdr" style="left:5px;top:89px;width:60px;height:13px;background:linear-gradient(#5c5c5c,#404040 92%,#000 92%)"></div>
<div class="a" id="tools" style="left:5px;top:102px;width:60px;height:452px;background:#d4d4d4;border-right:1px solid #555;border-top:1px solid #f0f0f0;border-left:1px solid #ececec"></div>
<div class="a" id="toolsbelow" style="left:5px;top:554px;width:60px;height:179px;background:#656565;border-right:1px solid #555"></div>


<!-- ===== tool icons ===== -->
<svg class="a" id="toolsvg" style="left:5px;top:101px" width="60" height="453" viewBox="5 101 60 453">
<defs>
<linearGradient id="gm" x1="0" y1="0" x2="1" y2="1"><stop offset="0" stop-color="#fafafa"/><stop offset="1" stop-color="#555"/></linearGradient>
<linearGradient id="gh" x1="0" y1="0" x2="1" y2="0"><stop offset="0" stop-color="#fff"/><stop offset="1" stop-color="#000"/></linearGradient>
<linearGradient id="gv" x1="0" y1="0" x2="0" y2="1"><stop offset="0" stop-color="#fff"/><stop offset="1" stop-color="#555"/></linearGradient>
<linearGradient id="gs" x1="0" y1="0" x2="1" y2="1"><stop offset="0" stop-color="#fff"/><stop offset=".6" stop-color="#f4f4f4"/><stop offset="1" stop-color="#c8c8c8"/></linearGradient>
<radialGradient id="ge" cx=".4" cy=".3" r=".8"><stop offset="0" stop-color="#fff"/><stop offset="1" stop-color="#777"/></radialGradient>
</defs>
<!-- grip -->
<g fill="#9a9a9a"><path d="M9 106.500h52M9 108.500h52" fill="none" stroke="#9c9c9c" stroke-dasharray="1 1" stroke-width="1"/></g>
<!-- separators -->
<g stroke="#8c8c8c" stroke-width="1"><path d="M8 162.5h54M8 250.5h54M8 316.5h54M8 362.5h54M8 387.5h54M8 434.5h54M8 490.5h54M8 507.5h54M8 529.5h54"/></g>
<g stroke="#f0f0f0" stroke-width="1"><path d="M8 163.5h54M8 251.5h54M8 317.5h54M8 363.5h54M8 388.5h54M8 435.5h54M8 491.5h54M8 508.5h54M8 530.5h54"/></g>
<!-- selection (active) -->
<rect x="10.5" y="119.5" width="23" height="19" fill="#fff" stroke="#000"/><path d="M10.5 138.5v-19h23" fill="none" stroke="#000" stroke-width="1.6"/>
<path d="M18 123v11.5l3-2.8 2.2 5.2 2.4-1-2.2-5h3.8z" fill="#111"/>
<!-- direct select -->
<path d="M42.5 122v11l2.6-2.4 2.2 5.4 2.2-1-2.2-5.2h3.6z" fill="#fff" stroke="#111" stroke-width="1.3" stroke-linejoin="round"/>
<path d="M58 135v3h-3z" fill="#111"/>
<!-- magic wand -->
<path d="M21 148.5l7.5 7.5" stroke="#222" stroke-width="1.8"/><path d="M18.5 141v10M13.5 146h10M15 142.5l7 7M22 142.5l-7 7" stroke="#555" stroke-width="1"/><circle cx="18.5" cy="146" r="1.6" fill="#fff" stroke="#333" stroke-width=".6"/>
<!-- lasso -->
<ellipse cx="47" cy="147.5" rx="7.5" ry="4.6" fill="none" stroke="#444" stroke-width="1.3"/><path d="M41 151c-1 2 2 3 1 6" fill="none" stroke="#444" stroke-width="1.2"/><path d="M48.500 148v9.500l2.300-2 3.700.2z" fill="#fff" stroke="#222" stroke-width="1"/>
<!-- pen -->
<path d="M21.500 166.500l-3.800 8.500 1.800 5h4l1.800-5z" fill="url(#gv)" stroke="#222" stroke-width="1"/><circle cx="21.500" cy="174.500" r="1.200" fill="#222"/><path d="M21.500 167v6" stroke="#222" stroke-width=".8"/><rect x="18.500" y="180.500" width="6" height="3" fill="#444" stroke="#222" stroke-width=".6"/><path d="M31 180v3h-3z" fill="#111"/>
<!-- type -->
<text x="47" y="181.500" text-anchor="middle" font-family="Liberation Serif,serif" font-size="20" fill="#111">T</text><path d="M58 180v3h-3z" fill="#111"/>
<!-- line -->
<path d="M15.500 190.500l13 12.500" stroke="#222" stroke-width="1.500"/><path d="M31 202v3h-3z" fill="#111"/>
<!-- ellipse -->
<ellipse cx="47" cy="196" rx="7" ry="5.300" fill="url(#ge)" stroke="#444" stroke-width="1"/><path d="M58 202v3h-3z" fill="#111"/>
<!-- brush -->
<path d="M29.500 211l-8 8.500 1.200 1.200z" fill="#888" stroke="#333" stroke-width=".8"/><path d="M21.500 219.500c-3-.5-3 3-6.500 4 4 1.500 8 0 7.700-2.800z" fill="#333"/>
<!-- pencil -->
<path d="M53 211.500l1.500 1.500-10 9.500-3.500 1.500 1.200-3.500z" fill="#e8e8e8" stroke="#333" stroke-width="1"/><path d="M41 224l1.200-3.500 2.200 2.200z" fill="#333"/><path d="M58 223v3h-3z" fill="#111"/>
<!-- blob brush -->
<path d="M13 236.500h12l2 2v6H13z" fill="#f4f4f4" stroke="#222" stroke-width="1.400"/><path d="M30.500 231l-7 6.500 1 1z" fill="#888" stroke="#333" stroke-width=".8"/><path d="M23.500 237.500c-2.500-.5-2.500 2.500-5.500 3.500 3.500 1.200 7 0 6.500-2.400z" fill="#333"/>
<!-- eraser -->
<path d="M44.500 233.500h10l-5 7h-10z" fill="#fafafa" stroke="#333" stroke-width="1"/><path d="M39.500 240.500h10l5-7v3l-5 7h-10z" fill="#888" stroke="#333" stroke-width="1"/><path d="M58 245v3h-3z" fill="#111"/>
<!-- rotate -->
<circle cx="22.500" cy="263.500" r="6" fill="none" stroke="#333" stroke-width="1.300" stroke-dasharray="1.300 1.600"/><path d="M16 259l4.500-2.500-.5 5z" fill="#222"/><path d="M31 268v3h-3z" fill="#111"/>
<!-- scale -->
<rect x="39.500" y="257.500" width="10" height="7" fill="#fafafa" stroke="#333"/><rect x="48.500" y="263.500" width="6" height="5" fill="#bbb" stroke="#333"/><path d="M41 259l5.500 4.500M41 259h3M41 259v3" stroke="#111" stroke-width="1.200" fill="none"/><path d="M58 268v3h-3z" fill="#111"/>
<!-- warp -->
<path d="M13.500 284c3-5 6-5 8 0s5 5 8-1" fill="none" stroke="#555" stroke-width="2.600"/><path d="M24 278.500c-3 2-3 5 0 7" fill="none" stroke="#777" stroke-width="1.500"/><path d="M25 285l5 5" stroke="#222" stroke-width="1.200"/><circle cx="30" cy="290" r="1.300" fill="#fff" stroke="#222" stroke-width=".7"/><path d="M31 291v3h-3z" fill="#111" transform="translate(1,0)"/>
<!-- free transform -->
<rect x="43.500" y="278.500" width="11" height="11" fill="none" stroke="#111" stroke-width="1.400" stroke-dasharray="2 2"/><path d="M39.500 278v11l7.500-5.500z" fill="#111"/>
<!-- shape builder -->
<circle cx="19" cy="304.500" r="5.500" fill="#e4e4e4" stroke="#555" stroke-width="1.200"/><circle cx="24" cy="304.500" r="4" fill="#f8f8f8" stroke="#555" stroke-width="1"/><circle cx="17" cy="304.500" r=".8" fill="#333"/><circle cx="20" cy="304.500" r=".8" fill="#333"/><path d="M24.500 304v9l2.200-2 3.300.2z" fill="#fff" stroke="#222" stroke-width="1"/><path d="M32 311v3h-3z" fill="#111"/>
<!-- perspective grid -->
<path d="M40.500 297.500v13.500M44.500 299v11M48.500 301v8M52 303v6M40.500 297.500l13 6M40.500 302l13 3.500M40.500 306.500l13 1.500M40.500 311h14" fill="none" stroke="#555" stroke-width="1.100"/><path d="M40 309h15v2.500H40z" fill="#999"/><path d="M58 311v3h-3z" fill="#111"/>
<!-- mesh -->
<rect x="15.500" y="325.500" width="15" height="10" fill="#eee" stroke="#333" stroke-width="1.200"/><path d="M15.500 331c5-3 10 2 15-1M21 325.500c2 4-1 6 1 10M26 325.500c-2 4 2 6 0 10" fill="none" stroke="#444" stroke-width=".9"/>
<!-- gradient -->
<rect x="39.500" y="325.500" width="15" height="10" fill="url(#gh)" stroke="#333" stroke-width="1"/>
<!-- eyedropper -->
<path d="M15 358.500l1.500-3.500 8-8 2 2-8 8z" fill="#e8e8e8" stroke="#333" stroke-width="1"/><path d="M23.500 345l5 5 1.800-4.800-2-2z" fill="#222"/><path d="M31 357v3h-3z" fill="#111"/>
<!-- blend -->
<rect x="39" y="343" width="4.500" height="4.500" fill="#ddd" stroke="#444" stroke-width=".8"/><path d="M44 348l5 5" stroke="#666" stroke-width="2.500" stroke-dasharray="1 1"/><circle cx="51" cy="355" r="3" fill="#fff" stroke="#333" stroke-width="1"/>
<!-- symbol sprayer -->
<rect x="18.500" y="373.500" width="10" height="10.500" rx="1.500" fill="#f4f4f4" stroke="#333" stroke-width="1.200"/><circle cx="23.500" cy="379" r="2.300" fill="#bbb" stroke="#333" stroke-width=".8"/><rect x="20.500" y="370.500" width="5" height="3" fill="#888" stroke="#333" stroke-width=".6"/><path d="M13.500 369h1M16 368h1M14.500 371.500h1M17.500 370h1M13 373.500h1" stroke="#333" stroke-width="1"/><path d="M32 382v3h-3z" fill="#111"/>
<!-- column graph -->
<path d="M39.500 369v14.500h15" fill="none" stroke="#333" stroke-width="1"/><rect x="41.500" y="375.500" width="2.500" height="7.500" fill="#777" stroke="#222" stroke-width=".6"/><rect x="45.500" y="378" width="2.500" height="5" fill="#aaa" stroke="#222" stroke-width=".6"/><rect x="49.500" y="372.500" width="2.500" height="10.500" fill="#555" stroke="#222" stroke-width=".6"/><path d="M58 382v3h-3z" fill="#111"/>
<!-- artboard -->
<rect x="16.500" y="396.500" width="10" height="9" fill="#f4f4f4" stroke="#222" stroke-width="1.400"/><path d="M13.500 396.500h16M13.500 405.500h16M16.500 393.500v15M26.500 393.500v15" stroke="#666" stroke-width=".8" stroke-dasharray="1 1"/>
<!-- slice -->
<path d="M39 407.500l9-8 2 1.500z" fill="#444" stroke="#222" stroke-width=".8"/><path d="M48 399.500l5.500-6 1 1-4 6.500z" fill="#bbb" stroke="#333" stroke-width=".8"/><path d="M45.500 394l8 9" stroke="#555" stroke-width="1"/><path d="M58 405v3h-3z" fill="#111"/>
<!-- hand -->
<path d="M18 430.500c-1-3-4-5-4-7 1-1 2.500 0 3.500 1.500v-7.500c0-1.300 1.800-1.300 1.800 0v-1.500c0-1.300 1.900-1.300 1.900 0v1c0-1.300 1.900-1.300 1.900 0v1.500c0-1.200 1.800-1.200 1.800 0v7c0 2-1 3.500-1.500 5z" fill="#fff" stroke="#222" stroke-width="1"/><path d="M19.300 418v5M21.200 417v6M23.100 418v5" stroke="#555" stroke-width=".7"/><path d="M32 428v3h-3z" fill="#111"/>
<!-- zoom -->
<circle cx="44.500" cy="420.500" r="4.600" fill="#f0f0f0" stroke="#222" stroke-width="1.500"/><path d="M47.800 424l5.200 5.500" stroke="#222" stroke-width="2.400"/>
<!-- fill / stroke -->
<rect x="27" y="454.500" width="28.500" height="28.500" fill="#fff" stroke="#000" stroke-width="1.200"/>
<rect x="36" y="463" width="11" height="11" fill="#d4d4d4" stroke="#000" stroke-width="1"/>
<path d="M28 482l26.500-26.500" stroke="#d8202c" stroke-width="2.400"/>
<rect x="13" y="440" width="28" height="28" fill="#e4e4e4" stroke="#000" stroke-width="1.200"/><rect x="14.500" y="441.500" width="25" height="25" fill="none" stroke="#fff" stroke-width="1"/>
<text x="27" y="461.500" text-anchor="middle" font-family="Liberation Sans,sans-serif" font-weight="bold" font-size="18" fill="#111">?</text>
<path d="M48.500 441.500c3-1.500 6 0 6.500 4" fill="none" stroke="#222" stroke-width="1.300"/><path d="M47 442l3.500-2.500v4.500z" fill="#222"/><path d="M53 445.500h4l-2 3z" fill="#222"/>
<rect x="17.500" y="476.500" width="6" height="6" fill="#fff" stroke="#000" stroke-width="1.400"/><rect x="14" y="473" width="6" height="6" fill="#fff" stroke="#000" stroke-width="1"/>
<!-- color / gradient / none -->
<rect x="12.500" y="493.500" width="9" height="9" fill="#5b463d" stroke="#777" stroke-width="1"/>
<rect x="29.500" y="493.500" width="9" height="9" fill="url(#gh)" stroke="#777" stroke-width="1"/>
<rect x="47.500" y="493.500" width="9" height="9" fill="#fff" stroke="#777" stroke-width="1"/><path d="M48 502l8-8" stroke="#d8202c" stroke-width="1.600"/>
<!-- draw modes -->
<rect x="10" y="510.500" width="16" height="15" fill="#fff" stroke="#222" stroke-width="1"/>
<circle cx="16.500" cy="516.500" r="4.800" fill="#f4f4f4" stroke="#222" stroke-width="1.100"/><rect x="18.500" y="518.500" width="5" height="5" fill="#999" stroke="#222" stroke-width="1"/>
<rect x="35.500" y="518.500" width="5" height="5" fill="#999" stroke="#222" stroke-width="1"/><circle cx="33.500" cy="516.500" r="4.800" fill="#f4f4f4" stroke="#222" stroke-width="1.100"/>
<rect x="42.500" y="510" width="17" height="16" fill="#e2dfd8"/><circle cx="50.500" cy="516.500" r="4.500" fill="#ddd" stroke="#999" stroke-width="1"/><path d="M50.500 517.500v-4.500a4.500 4.500 0 0 1 4.500 4.500z" fill="#aaa"/>
<!-- screen mode -->
<rect x="24.500" y="538.500" width="13" height="9" fill="url(#gs)" stroke="none"/><path d="M24.500 547.500h13v-9" fill="none" stroke="#222" stroke-width="1.300"/><rect x="31.500" y="533.500" width="13" height="10" fill="url(#gs)"/><path d="M31.500 543.500h13v-10" fill="none" stroke="#222" stroke-width="1.300"/><path d="M31.500 534h13" stroke="#888" stroke-width="1.500"/>
</svg>

<!-- ===== right dock ===== -->
<div class="a" id="dockbg" style="left:983px;top:89px;width:36px;height:644px;background:#656565"></div>
<div class="a" id="dockhdr" style="left:983px;top:89px;width:36px;height:13px;background:linear-gradient(#5c5c5c,#404040 92%,#000 92%)"></div>


<!-- header arrows -->
<svg class="a" style="left:8px;top:92px" width="8" height="7" viewBox="0 0 8 7"><path d="M3.500 0v7L0 3.500zM8 0v7L4.500 3.500z" fill="#e0e0e0"/></svg>
<svg class="a" style="left:1009px;top:92px" width="8" height="7" viewBox="0 0 8 7"><path d="M3.500 0v7L0 3.500zM8 0v7L4.500 3.500z" fill="#e0e0e0"/></svg>
<!-- dock groups -->
<div class="a dg" style="top:102px;height:73px"></div>
<div class="a dg" style="top:176px;height:73px"></div>
<div class="a dg" style="top:250px;height:103px"></div>
<div class="a dg" style="top:354px;height:73px"></div>
<div class="a dg" style="top:428px;height:74px"></div>
<div class="a" style="left:987px;top:365px;width:29px;height:27px;background:#a8a8a8;border:1px solid #6a6a6a;border-radius:2px;box-shadow:inset 0 1px 2px #777"></div>
<svg class="a" id="docksvg" style="left:984px;top:102px" width="35" height="402" viewBox="984 102 35 402">
<defs>
<radialGradient id="gb" cx=".4" cy=".35" r=".7"><stop offset="0" stop-color="#999"/><stop offset="1" stop-color="#111"/></radialGradient>
<linearGradient id="gd" x1="0" y1="0" x2="0" y2="1"><stop offset="0" stop-color="#fff"/><stop offset="1" stop-color="#444"/></linearGradient>
<linearGradient id="gs2" x1="0" y1="0" x2="1" y2="1"><stop offset="0" stop-color="#fff"/><stop offset=".6" stop-color="#f4f4f4"/><stop offset="1" stop-color="#bbb"/></linearGradient>
<linearGradient id="gd2" x1="0" y1="0" x2="1" y2="1"><stop offset="0" stop-color="#fff"/><stop offset="1" stop-color="#222"/></linearGradient>
</defs>
<g fill="none" stroke="#a4a4a4" stroke-dasharray="1 1"><path d="M988 106.500h28M988 108.500h28M988 180.500h28M988 182.500h28M988 254.500h28M988 256.500h28M988 358.500h28M988 360.500h28M988 432.500h28M988 434.500h28"/></g>
<!-- color palette -->
<path d="M993 130c0-5 5-9.500 11-9.500 4 0 7 2 6.500 5-.4 2.400-3.500 1.500-4 3.500s2.500 3-.5 5.200c-4 2.500-13 1.800-13-4.200z" fill="#333" stroke="#222" stroke-width=".6"/><g fill="#eee"><circle cx="997" cy="130.500" r="1.500"/><circle cx="999" cy="126" r="1.500"/><circle cx="1003.500" cy="123.500" r="1.500"/><circle cx="1001" cy="133" r="1.300"/></g>
<!-- color guide -->
<path d="M993.500 165.500v-17a17 17 0 0 1 17 17z" fill="url(#gd2)" stroke="#222" stroke-width="1"/><path d="M993.500 165.500l7-15.500M993.500 165.500l12.500-12M993.500 165.500l16-6.500" stroke="#555" stroke-width=".6"/>
<!-- swatches -->
<rect x="993" y="195" width="17" height="13" fill="#222"/><g fill="#eee"><rect x="1006" y="196" width="3" height="3"/><rect x="1002" y="200" width="3" height="3"/><rect x="1006" y="200" width="3" height="3"/><rect x="998" y="204" width="3" height="3"/><rect x="1002" y="204" width="3" height="3"/><rect x="1006" y="204" width="3" height="3"/></g><g fill="#777"><rect x="994" y="196" width="3" height="3"/><rect x="998" y="196" width="3" height="3"/><rect x="1002" y="196" width="3" height="3"/><rect x="994" y="200" width="3" height="3"/><rect x="998" y="200" width="3" height="3"/><rect x="994" y="204" width="3" height="3"/></g>
<!-- brushes -->
<rect x="998.500" y="231.500" width="7" height="7.500" fill="#f4f4f4" stroke="#111" stroke-width="1.600"/><path d="M1000 231l-3-6M1002 231v-8M1004 231l4-6" stroke="#222" stroke-width="1.400"/><path d="M995 222l2.500 4 1-1.500z" fill="#222"/><ellipse cx="1008.500" cy="224.500" rx="2.200" ry="1.600" fill="#222"/>
<!-- stroke -->
<path d="M993 269.500h17" stroke="#333" stroke-width="1" stroke-dasharray="2 1"/><path d="M993 273h17" stroke="#333" stroke-width="1.500"/><path d="M993 277h17" stroke="#222" stroke-width="2.200"/><path d="M993 281.500h17" stroke="#111" stroke-width="3"/>
<!-- gradient -->
<rect x="993.500" y="299.500" width="16" height="11" fill="url(#gd2)" stroke="#222" stroke-width="1"/>
<!-- transparency -->
<circle cx="999" cy="332" r="5.600" fill="#333" stroke="#222" stroke-width=".8"/><circle cx="1003.500" cy="337" r="5.600" fill="#e8e8e8" fill-opacity=".8" stroke="#333" stroke-width=".9"/>
<!-- appearance -->
<circle cx="1001.500" cy="379" r="8.300" fill="#eee" stroke="#555" stroke-width="1" stroke-dasharray="1 1"/><circle cx="1001.500" cy="379" r="6" fill="url(#gb)"/>
<!-- graphic styles -->
<rect x="998" y="402.500" width="11" height="11.500" fill="url(#gs2)"/><path d="M998 414h11.500v-11.500" fill="none" stroke="#333" stroke-width="1.200"/><rect x="993.500" y="410" width="7.500" height="7.500" fill="#fff" stroke="#222" stroke-width="1.100"/><rect x="996" y="412.500" width="3" height="3" fill="#eee" stroke="#222" stroke-width=".8"/>
<!-- layers -->
<g transform="translate(0,1)"><path d="M1001.500 453l9 4.500-9 4.500-9-4.500z" fill="#222"/><path d="M1001.500 444.500l9 4.500-9 4.500-9-4.500z" fill="#f4f4f4" stroke="#444" stroke-width=".9"/></g>
<!-- artboards -->
<g transform="translate(0,1.500)"><path d="M993.500 473.500h6l3 3v9h-9z" fill="#f4f4f4" stroke="#333" stroke-width="1"/><path d="M999.500 480.500h7l3 3v9h-10z" fill="#e0e0e0" stroke="#333" stroke-width="1"/></g>
</svg>

<!-- ===== scrollbars / status ===== -->
<div class="a chk" id="vscroll" style="left:967px;top:110px;width:16px;height:607px"></div>
<div class="a" id="status" style="left:65px;top:717px;width:918px;height:16px;background:#d4d0c8"></div>
<div class="a chk" id="hscroll" style="left:429px;top:717px;width:538px;height:16px"></div>
<div class="a" style="left:967px;top:717px;width:16px;height:16px;background:#fff"></div>


<!-- vscroll buttons -->
<div class="a btn" style="left:967px;top:110px;width:16px;height:15px"><div class="a tri-u" style="left:3px;top:4px"></div></div>
<div class="a btn" style="left:967px;top:702px;width:16px;height:15px"><div class="a tri-d" style="left:3px;top:5px"></div></div>
<!-- status bar items -->
<div class="a sunk" style="left:66px;top:717px;width:57px;height:17px"><div class="a" style="left:3px;top:3px;font:10.500px/13px 'Liberation Sans',sans-serif;letter-spacing:-.2px">150%</div><div class="a btn" style="left:41px;top:1px;width:14px;height:14px"><div class="a tri-d" style="left:3px;top:5px;border-width:4px 3px 0 3px"></div></div></div>
<svg class="a" style="left:128px;top:721px" width="28" height="9" viewBox="0 0 28 9"><path d="M1.500 0v9" stroke="#9a9a9a" stroke-width="1.300"/><path d="M7.500 0v9L3 4.500zM24 0v9l-4.500-4.500z" fill="#9a9a9a"/></svg>
<div class="a sunk" style="left:158px;top:717px;width:42px;height:17px"><div class="a" style="left:3px;top:3px;font:10.500px/13px 'Liberation Sans',sans-serif">1</div><div class="a btn" style="left:26px;top:1px;width:14px;height:14px"><div class="a tri-d" style="left:3px;top:5px;border-width:4px 3px 0 3px"></div></div></div>
<svg class="a" style="left:207px;top:721px" width="24" height="9" viewBox="0 0 24 9"><path d="M1 0v9l4.500-4.500zM16 0v9l4.500-4.500z" fill="#9a9a9a"/><path d="M21.500 0v9" stroke="#9a9a9a" stroke-width="1.300"/></svg>
<div class="a" style="left:235px;top:718px;width:179px;height:15px;background:#d9d9d9;border-top:1px solid #b0b0b0"></div>
<div class="a tx" style="left:313px;top:718px">选择</div>
<div class="a tri-r" style="left:404px;top:721px;border-width:5px 0 5px 6px"></div>
<div class="a btn" style="left:414px;top:717px;width:15px;height:16px"><div class="a tri-l" style="left:4px;top:3px"></div></div>
<div class="a btn" style="left:683px;top:717px;width:14px;height:16px"></div>
<div class="a btn" style="left:952px;top:717px;width:15px;height:16px"><div class="a tri-r" style="left:5px;top:3px"></div></div>


<!-- ===== appearance panel ===== -->
<div class="a" id="appear" style="left:768px;top:361px;width:215px;height:267px;background:#d6d6d6;border-left:1px solid #555;border-bottom:1px solid #555;overflow:hidden">
  <div class="a" style="left:0;top:0;width:215px;height:3px;background:#3c3c3c"></div>
  <div class="a" style="left:0;top:3px;width:215px;height:18px;background:linear-gradient(#a6a6a6,#8e8e8e);border-bottom:1px solid #6a6a6a"></div>
  <div class="a" style="left:0;top:3px;width:38px;height:18px;background:#d6d6d6;border-right:1px solid #6a6a6a;border-top:1px solid #eee"></div>
  <div class="a" style="left:39px;top:3px;width:61px;height:17px;background:linear-gradient(#bcbcbc,#b0b0b0);border-right:1px solid #6a6a6a;border-top:1px solid #ccc"></div>
  <div class="a tx" style="left:7px;top:5px;color:#222">外观</div>
  <div class="a tx" style="left:45px;top:5px;color:#222">图形样式</div>
  <svg class="a" style="left:174px;top:8px" width="40" height="9" viewBox="0 0 40 9"><path d="M0 1v7l3.500-3.500zM5 1v7l3.500-3.500z" fill="#222"/><path d="M15.500 0v9" stroke="#666"/><path d="M22 3h5l-2.500 3z" fill="#222"/><path d="M28 1.500h9M28 4.500h9M28 7.500h9" stroke="#222" stroke-width="1.200"/></svg>
  <!-- rows -->
  <div class="a" style="left:4px;top:25px;width:20px;height:20px;background:#fff;border:1px solid #000"></div>
  <div class="a" style="left:36px;top:28px;font:bold 12px/14px 'Liberation Sans','Noto Sans CJK SC',sans-serif">编组</div>
  <div class="a" style="left:0;top:45px;width:198px;height:1px;background:#222"></div>
  <div class="a tx" style="left:36px;top:52px">内容</div>
  <div class="a" style="left:0;top:72px;width:198px;height:22px;background:#0a246a"></div>
  <div class="a" style="left:181px;top:74px;font:italic bold 12px/14px 'Liberation Serif',serif;color:#555">fx</div>
  <div class="a tx" style="left:36px;top:76px;color:#fff">投影</div>
  <div class="a tx" style="left:36px;top:100px"><span class="lnk">不透明度</span>:</div>
  <div class="a tx" style="left:91px;top:100px">默认值</div>
  <div class="a" style="left:0;top:118px;width:198px;height:1px;background:#222"></div>
  <!-- scrollbar -->
  <div class="a chk" style="left:198px;top:22px;width:16px;height:228px;background-color:#d8d8d8"></div>
  <div class="a" style="left:198px;top:24px;width:16px;height:15px;background:#d6d6d6;border:1px solid;border-color:#fff #777 #777 #fff"><div class="a tri-u" style="left:3px;top:4px;border-bottom-color:#777"></div></div>
  <div class="a" style="left:198px;top:233px;width:16px;height:15px;background:#d6d6d6;border:1px solid;border-color:#fff #777 #777 #fff"><div class="a tri-d" style="left:3px;top:5px;border-top-color:#777"></div></div>
  <!-- bottom bar -->
  <div class="a" style="left:0;top:249px;width:215px;height:1px;background:#444"></div>
  <div class="a" style="left:0;top:250px;width:215px;height:17px;background:#d6d6d6"></div>
  <svg class="a" style="left:112px;top:251px" width="102" height="15" viewBox="0 0 102 15"><circle cx="6" cy="7" r="4.500" fill="none" stroke="#333" stroke-width="1.300"/><path d="M3 4l6 6" stroke="#333" stroke-width="1.300"/><rect x="36.500" y="2.500" width="9" height="9" fill="#fff" stroke="#333"/><rect x="40" y="6" width="4.500" height="4.500" fill="#888" stroke="#222" stroke-width=".8"/><path d="M67.500 4.500h7l-.8 8h-5.400z" fill="#eee" stroke="#222" stroke-width="1"/><path d="M66.500 3.500h9M69.500 2h4" stroke="#222" stroke-width="1.200"/><path d="M69.500 6v5M71 6v5M72.500 6v5" stroke="#444" stroke-width=".7"/><path d="M99 4v1M96 7v1M99 7v1M93 10v1M96 10v1M99 10v1M90 13v1M93 13v1M96 13v1M99 13v1" stroke="#999" stroke-width="1.500"/></svg>
</div>

<!-- ===== drop shadow dialog ===== -->
<div class="a" id="dlg" style="left:427px;top:425px;width:448px;height:294px;background:#d4d0c8;border:1px solid;border-color:#d4d0c8 #404040 #404040 #d4d0c8;box-shadow:inset 1px 1px 0 #fff,inset -1px -1px 0 #808080;font:11px/13px 'Liberation Sans','WenQuanYi Zen Hei','Noto Sans CJK SC',sans-serif">
  <div class="a" style="left:2px;top:2px;width:442px;height:18px;background:#0a246a"></div>
  <div class="a" style="left:4px;top:4px;color:#fff;font:bold 12px/14px 'Liberation Sans','Noto Sans CJK SC',sans-serif">投影</div>
  <div class="a" style="left:1px;top:1px;width:446px;height:292px">
  <!-- group box -->
  <div class="a" style="left:16px;top:42px;width:271px;height:231px;border:1px solid;border-color:#808080 #fff #fff #808080;box-shadow:inset 1px 1px 0 #fff,1px 1px 0 #fff inset"></div>
  <div class="a" style="left:16px;top:42px;width:271px;height:231px;border:1px solid #808080;box-shadow:1px 1px 0 #fff,inset 1px 1px 0 #fff"></div>
  <div class="a dl" style="left:27px;top:35px;background:#d4d0c8;padding:0 4px">选项</div>
  <!-- rows -->
  <div class="a dl dr" style="top:56px">模式(<u>M</u>):</div>
  <div class="a sunk" style="left:107px;top:53px;width:73px;height:21px"><div class="a dl" style="left:4px;top:4px">正片叠底</div><div class="a btn" style="left:55px;top:2px;width:16px;height:17px"><div class="a tri-d" style="left:3px;top:6px"></div></div></div>
  <div class="a dl dr" style="top:86px">不透明度(<u>O</u>):</div>
  <div class="a sunk" style="left:107px;top:83px;width:84px;height:21px"><div class="a dl" style="left:5px;top:4px">50</div><div class="a btn" style="left:66px;top:2px;width:16px;height:17px"><div class="a tri-r" style="left:6px;top:4px"></div></div></div>
  <div class="a dl" style="left:194px;top:87px">%</div>
  <div class="a dl dr" style="top:118px">X 位移(<u>X</u>):</div>
  <div class="a sunk" style="left:107px;top:115px;width:84px;height:21px"><div class="a dl" style="left:19px;top:4px">1.5 mm</div></div>
  <div class="a spin" style="left:109px;top:117px"><b class="tri-u"></b><b class="tri-d"></b></div>
  <div class="a dl dr" style="top:150px">Y 位移(<u>Y</u>):</div>
  <div class="a sunk" style="left:107px;top:147px;width:84px;height:21px"><div class="a dl" style="left:19px;top:4px">1.5 mm</div></div>
  <div class="a spin" style="left:109px;top:149px"><b class="tri-u"></b><b class="tri-d"></b></div>
  <div class="a dl dr" style="top:182px">模糊(<u>B</u>):</div>
  <div class="a sunk" style="left:107px;top:179px;width:84px;height:21px"><div class="a dl" style="left:5px;top:4px">1.76 mm</div><div class="a btn" style="left:66px;top:2px;width:16px;height:17px"><div class="a tri-r" style="left:6px;top:4px"></div></div></div>
  <!-- radios -->
  <div class="a radio" style="left:42px;top:217px"><b></b></div>
  <div class="a dl" style="left:58px;top:216px">颜色(<u>C</u>):</div>
  <div class="a" style="left:107px;top:211px;width:26px;height:26px;background:#000;border:1px solid;border-color:#808080 #fff #fff #808080"></div>
  <div class="a radio" style="left:149px;top:217px"></div>
  <div class="a dl" style="left:165px;top:216px">暗度(<u>D</u>):</div>
  <div class="a sunk" style="left:214px;top:214px;width:42px;height:20px;background:#d4d0c8"><div class="a dl" style="left:5px;top:4px;color:#808080">100</div></div>
  <div class="a dl" style="left:260px;top:217px">%</div>
  <!-- buttons -->
  <div class="a" style="left:304px;top:41px;width:80px;height:20px;border:1px solid #000"><div class="btn" style="width:78px;height:18px;text-align:center;font:12px/15px 'Liberation Sans','WenQuanYi Zen Hei','Noto Sans CJK SC',sans-serif">确定</div></div>
  <div class="a btn" style="left:304px;top:71px;width:80px;height:20px;text-align:center;font:12px/17px 'Liberation Sans','WenQuanYi Zen Hei','Noto Sans CJK SC',sans-serif">取消</div>
  <div class="a sunk" style="left:304px;top:102px;width:13px;height:13px"><svg class="a" style="left:2px;top:2px" width="7" height="7" viewBox="0 0 7 7"><path d="M0 2.500l2.500 2.500 4.500-4.500v2l-4.500 4.500-2.500-2.500z" fill="#000"/></svg></div>
  <div class="a dl" style="left:320px;top:101px;border:1px dotted #000;padding:0 1px;letter-spacing:0">预览(<u>P</u>)</div>
  </div>
</div>

<!-- ===== window bottom border ===== -->
<div class="a" id="frameB" style="left:0;top:733px;width:1024px;height:4px;background:linear-gradient(#dcdcdc 0 3px,#fff 3px 4px)"></div>

<!-- ===== taskbar ===== -->
<div class="a" id="taskbar" style="left:0;top:737px;width:1024px;height:31px;background:linear-gradient(#d4d0c8 0 2px,#fff 2px 3px,#d4d0c8 3px)"></div>


<!-- taskbar content -->
<div class="a btn" style="left:2px;top:742px;width:47px;height:22px"></div>
<svg class="a" style="left:5px;top:745px" width="16" height="16" viewBox="0 0 16 16"><path d="M1 3.500c2-1.200 4-1.200 6 0l-1 4.500c-2-1.200-4-1.200-6 0z" fill="#e8541c"/><path d="M8 3.800c2 1 4 1 6-.3l-1 4.500c-2 1.300-4 1.300-6 .3z" fill="#58b030"/><path d="M-.3 9c2-1.200 4-1.200 6 0l-1 4.500c-2-1.200-4-1.200-6 0z" fill="#2c68d8"/><path d="M6.700 9.300c2 1 4 1 6-.3l-1 4.500c-2 1.300-4 1.300-6 .3z" fill="#f4b820"/></svg>
<div class="a tx" style="left:22px;top:746px;font-size:12px;font-weight:bold;letter-spacing:0">开始</div>
<!-- quick launch -->
<svg class="a" style="left:56px;top:745px" width="17" height="17" viewBox="0 0 17 17"><circle cx="8.500" cy="8.500" r="6.300" fill="#fff" stroke="#f0a020" stroke-width="3"/><path d="M2.200 8.500a6.300 6.300 0 0 1 6.300-6.300" fill="none" stroke="#e85818" stroke-width="3"/><path d="M8.500 2.200a6.300 6.300 0 0 1 6.300 6.300" fill="none" stroke="#58b030" stroke-width="3"/><path d="M8.500 14.800a6.300 6.300 0 0 1-6.300-6.300" fill="none" stroke="#2868c8" stroke-width="3"/><circle cx="8.500" cy="8.500" r="4.600" fill="#fff" stroke="#999" stroke-width=".5"/><path d="M6.800 5.500v6l5-3z" fill="#1c3c88"/></svg>
<svg class="a" style="left:79px;top:745px" width="18" height="17" viewBox="0 0 18 17"><rect x="1" y="2" width="14" height="14" rx="3" fill="#3888e0" stroke="#1858b0"/><rect x="3.500" y="4.500" width="9" height="9" rx="2" fill="#f4f8ff"/><path d="M6 11.500l5.500-7" stroke="#2060b8" stroke-width="2"/><path d="M5 12h5" stroke="#2060b8" stroke-width="1.200"/><circle cx="15" cy="5" r="1.600" fill="#f07020"/></svg>
<svg class="a" style="left:101px;top:744px" width="20" height="19" viewBox="0 0 20 19"><circle cx="9.500" cy="10.500" r="6" fill="none" stroke="#2c7cd8" stroke-width="3.600"/><path d="M4 10.500h11.500" stroke="#2c7cd8" stroke-width="2.800"/><path d="M10 11.500h8v4.500h-5.500z" fill="#d4d0c8"/><path d="M1.500 14c-2.500-6.500 8-13 17-10.500" fill="none" stroke="#68b0f0" stroke-width="1.500"/></svg>
<div class="a" style="left:130px;top:741px;font:bold 15px/15px 'Liberation Sans',sans-serif">»</div>
<div class="a chk" style="left:143px;top:741px;width:160px;height:23px;border:1px solid;border-color:#404040 #fff #fff #404040;box-shadow:inset 1px 1px 0 #808080;background-color:#e9e7e2"></div>
<div class="a" style="left:148px;top:745px;width:16px;height:16px;background:linear-gradient(#f09818,#c85c04);border:1px solid #a04c00;font:bold 10px/14px 'Liberation Sans',sans-serif;color:#ffe8a0;text-align:center;letter-spacing:-.5px">Ai</div>
<div class="a zh" style="left:168px;top:746px"><i>12.ai* @ 150% (CMYK...</i></div>
<!-- tray -->
<svg class="a" style="left:957px;top:746px" width="19" height="16" viewBox="0 0 19 16"><rect x="1" y="5" width="16.500" height="9.500" rx="1.500" fill="#fff" stroke="#111" stroke-width="1.200"/><path d="M3 8h12.500M3 11h12.500" stroke="#111" stroke-width="1.600" stroke-dasharray="1.300 1"/><path d="M5 5c0-3 8-1 9-3" fill="none" stroke="#111" stroke-width="1" stroke-dasharray="1 1"/></svg>
<div class="a" style="left:978px;top:743px;width:2px;height:22px;border-left:1px solid #808080;border-right:1px solid #fff"></div>
<div class="a" style="left:985px;top:742px;width:37px;height:23px;border:1px solid;border-color:#808080 #fff #fff #808080"></div>
<div class="a" style="left:989px;top:747px;font:bold 12px/12px 'Liberation Sans',sans-serif">«</div>
<svg class="a" style="left:1002px;top:745px" width="19" height="17" viewBox="0 0 19 17"><rect x="1.500" y="4.500" width="8" height="7" rx="1" fill="#58a8f8" stroke="#2868d0"/><path d="M3 14.500h6" stroke="#3058c0" stroke-width="2"/><path d="M5.500 12v2" stroke="#3058c0" stroke-width="1.500"/><path d="M11.500 6c1 1.500 1 3 0 4.500M13.800 4.500c1.600 2.500 1.600 5 0 7.500M16 3c2.200 3.500 2.200 7 0 10.500" fill="none" stroke="#28c828" stroke-width="1.200"/></svg>

</div>
</body>
</html>
